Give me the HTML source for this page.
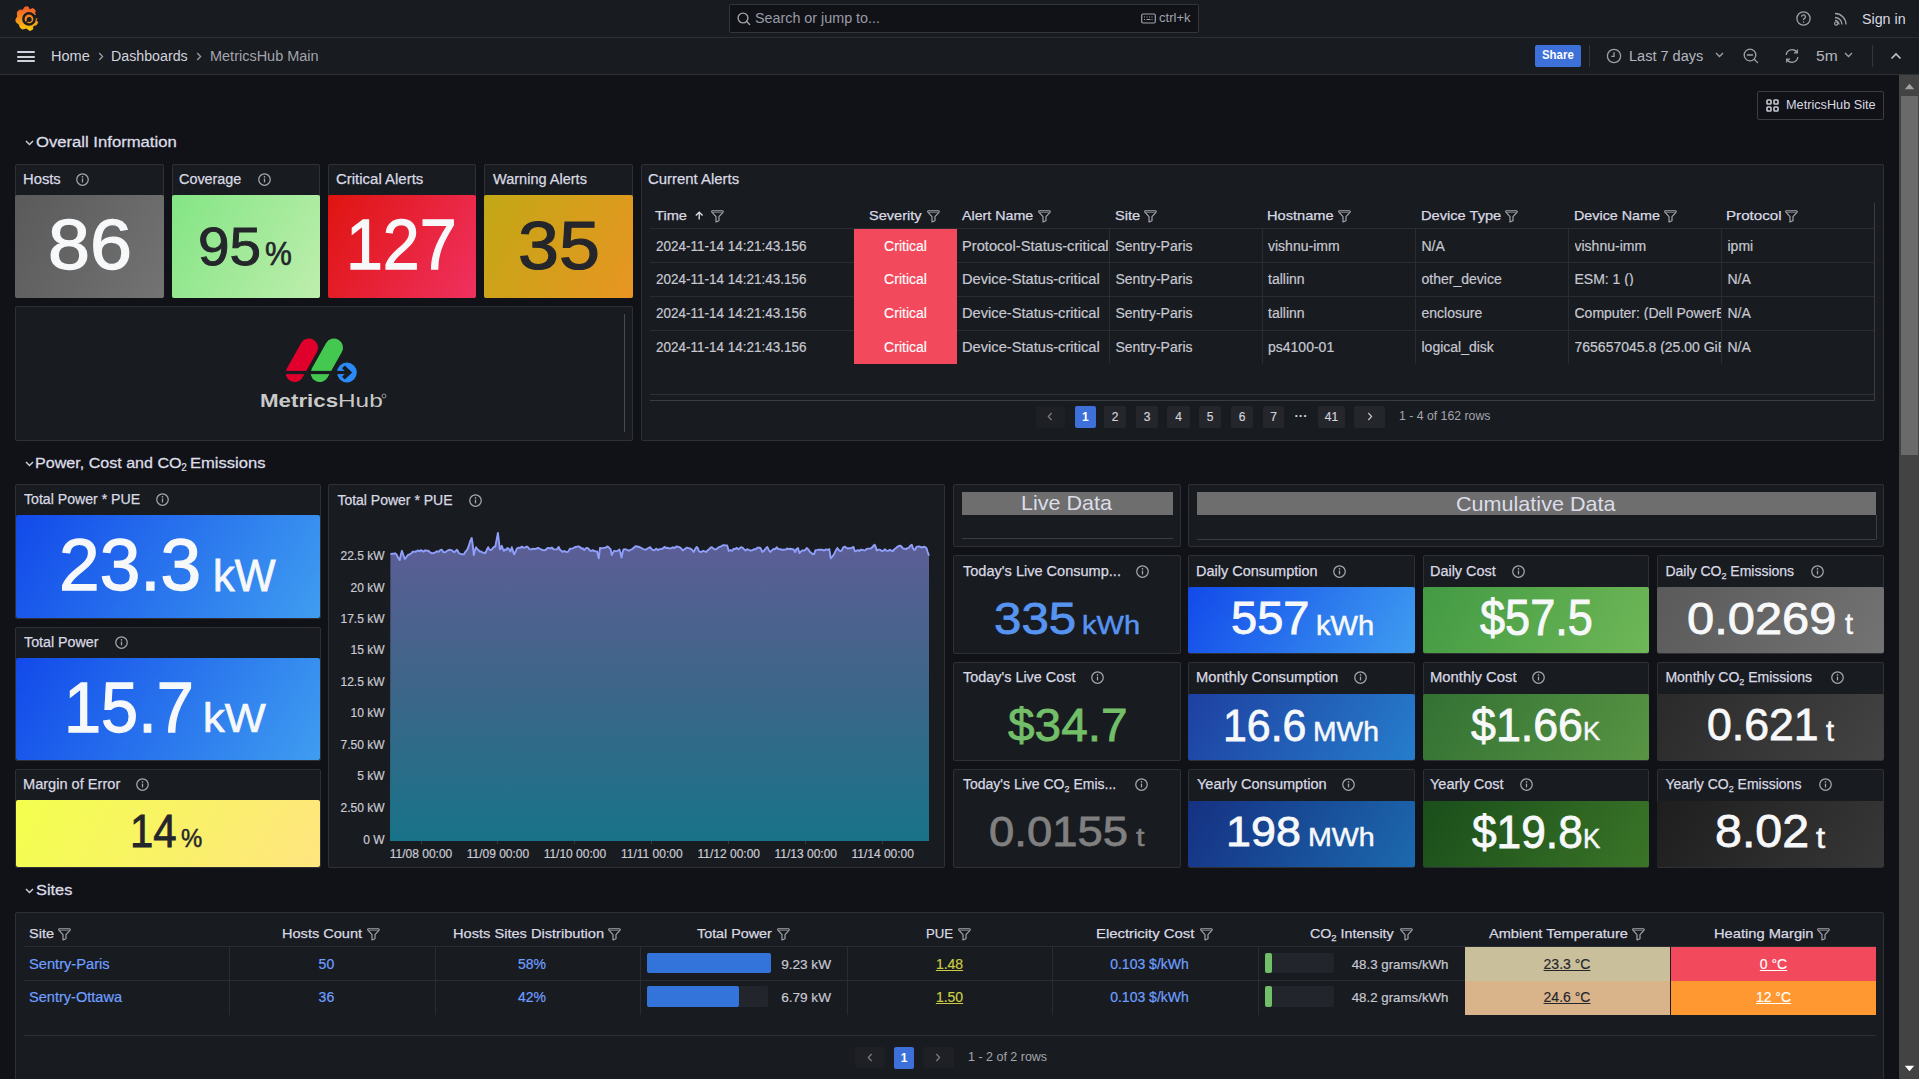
<!DOCTYPE html><html><head><meta charset="utf-8"><title>MetricsHub Main - Dashboards - Grafana</title><style>
*{box-sizing:border-box;margin:0;padding:0}
html,body{width:1919px;height:1079px;overflow:hidden;background:#111217}
body{font-family:"Liberation Sans",sans-serif;position:relative}
.t{position:absolute;white-space:nowrap}
.b{position:absolute}
.p{position:absolute;background:#181b1f;border:1px solid #2e3036;border-radius:2px}
svg{position:absolute;overflow:visible}
</style></head><body>
<div class="b" style="left:0px;top:0px;width:1919px;height:37px;background:#181b1f"></div>
<div class="b" style="left:0px;top:37px;width:1919px;height:1px;background:#2e3036"></div>
<div class="b" style="left:0px;top:38px;width:1919px;height:36px;background:#181b1f"></div>
<div class="b" style="left:0px;top:74px;width:1919px;height:1px;background:#2e3036"></div>
<svg style="left:0;top:0" width="45" height="37" viewBox="0 0 45 37">
<defs><linearGradient id="gl" x1="0" y1="6" x2="0" y2="31" gradientUnits="userSpaceOnUse"><stop offset="0" stop-color="#f4582a"/><stop offset="0.5" stop-color="#f68a1e"/><stop offset="1" stop-color="#fccd0b"/></linearGradient></defs>
<polygon fill="url(#gl)" stroke="url(#gl)" stroke-width="1.0" stroke-linejoin="round" points="25.15,6.89 28.05,6.89 29.63,9.91 32.78,8.41 35.09,10.21 34.65,14.05 36.84,15.96 37.20,18.52 35.80,20.07 37.63,22.28 36.44,24.85 33.00,25.45 32.51,29.37 29.76,30.48 26.19,27.99 22.84,29.04 20.45,27.82 19.22,24.36 16.39,22.22 15.84,19.64 17.62,16.29 17.34,12.22 19.19,10.17 22.82,10.20"/>
<circle cx="29.0" cy="18.9" r="5.6" fill="none" stroke="#181b1f" stroke-width="2.5"/>
<circle cx="29.2" cy="19.5" r="2.5" fill="#181b1f"/>
<path d="M33.6 15.6 L38.5 14.2 L38.5 18.6 L34.2 18.2 Z" fill="#181b1f"/>
<path d="M26.2 20.6 L26.0 22.6 L28.6 22.2 Z" fill="#181b1f"/>
</svg>
<div class="b" style="left:728.5px;top:3.5px;width:470px;height:29px;background:#111217;border:1px solid #34363c;border-radius:2px"></div>
<svg style="left:737px;top:12px" width="14" height="14" viewBox="0 0 14 14"><circle cx="6" cy="6" r="4.9" fill="none" stroke="#a0a1ab" stroke-width="1.4"/><path d="M9.6 9.6 L12.6 12.6" stroke="#a0a1ab" stroke-width="1.4" stroke-linecap="round"/></svg>
<div class="t" style="left:755.34px;top:11.15px;font-size:14px;line-height:14px;color:#9a9ba6;transform:scaleX(1.0229);transform-origin:0 0;">Search or jump to...</div>
<svg style="left:1141px;top:13px" width="15" height="11" viewBox="0 0 15 11"><rect x="0.7" y="1" width="13.6" height="9" rx="1.5" fill="none" stroke="#a0a1ab" stroke-width="1.2"/><path d="M3 4h1M5.5 4h1M8 4h1M10.5 4h1M3 6.5h1M5.5 6.5h4M10.5 6.5h1" stroke="#a0a1ab" stroke-width="1"/></svg>
<div class="t" style="left:1159.45px;top:12.34px;font-size:12px;line-height:12px;color:#a0a1ab;transform:scaleX(1.0873);transform-origin:0 0;">ctrl+k</div>
<svg style="left:1796px;top:11px" width="15" height="15" viewBox="0 0 15 15"><circle cx="7.5" cy="7.5" r="6.6" fill="none" stroke="#a0a1ab" stroke-width="1.3"/><path d="M5.6 5.8 A1.9 1.9 0 1 1 8.2 7.6 Q7.5 8 7.5 9" fill="none" stroke="#a0a1ab" stroke-width="1.3"/><circle cx="7.5" cy="11" r="0.8" fill="#a0a1ab"/></svg>
<svg style="left:1834px;top:11px" width="14" height="15" viewBox="0 0 14 15"><circle cx="2.2" cy="12.6" r="1.6" fill="none" stroke="#a0a1ab" stroke-width="1.2"/><path d="M1 6.5 A7 7 0 0 1 8 13.5 M1 2.5 A11 11 0 0 1 12 13.5" fill="none" stroke="#a0a1ab" stroke-width="1.3"/><path d="M1 9.5 A4 4 0 0 1 5 13.5" fill="none" stroke="#a0a1ab" stroke-width="1.3"/></svg>
<div class="t" style="left:1861.84px;top:11.65px;font-size:14px;line-height:14px;color:#d8d9e3;transform:scaleX(1.0183);transform-origin:0 0;">Sign in</div>
<div class="b" style="left:17px;top:51px;width:18px;height:2px;background:#d0d1dc;border-radius:1px"></div>
<div class="b" style="left:17px;top:55.5px;width:18px;height:2px;background:#d0d1dc;border-radius:1px"></div>
<div class="b" style="left:17px;top:60px;width:18px;height:2px;background:#d0d1dc;border-radius:1px"></div>
<div class="t" style="left:51.31px;top:48.65px;font-size:14px;line-height:14px;color:#d2d3de;transform:scaleX(1.0401);transform-origin:0 0;">Home</div>
<svg style="left:98px;top:52px" width="6" height="9" viewBox="0 0 6 9"><path d="M1.2 1 L4.6 4.5 L1.2 8" fill="none" stroke="#9a9ba6" stroke-width="1.3"/></svg>
<div class="t" style="left:111.33px;top:48.65px;font-size:14px;line-height:14px;color:#d2d3de;transform:scaleX(1.0158);transform-origin:0 0;">Dashboards</div>
<svg style="left:196px;top:52px" width="6" height="9" viewBox="0 0 6 9"><path d="M1.2 1 L4.6 4.5 L1.2 8" fill="none" stroke="#9a9ba6" stroke-width="1.3"/></svg>
<div class="t" style="left:210.31px;top:48.65px;font-size:14px;line-height:14px;color:#a3a4ae;transform:scaleX(1.0343);transform-origin:0 0;">MetricsHub Main</div>
<div class="b" style="left:1535px;top:45px;width:46px;height:22px;background:#3d71d9;border-radius:2px"></div>
<div class="t" style="left:1542.17px;top:49.34px;font-size:12px;line-height:12px;color:#ffffff;font-weight:700;transform:scaleX(0.9512);transform-origin:0 0;">Share</div>
<div class="b" style="left:1589px;top:45px;width:1px;height:22px;background:#34363c"></div>
<svg style="left:1606px;top:48px" width="16" height="16" viewBox="0 0 16 16"><circle cx="8" cy="8" r="6.6" fill="none" stroke="#a0a1ab" stroke-width="1.3"/><path d="M8 4.2 V8.3 H5.4" fill="none" stroke="#a0a1ab" stroke-width="1.3"/></svg>
<div class="t" style="left:1628.81px;top:49.15px;font-size:14px;line-height:14px;color:#b5b6c0;transform:scaleX(1.0365);transform-origin:0 0;">Last 7 days</div>
<svg style="left:1715px;top:52px" width="9" height="6" viewBox="0 0 9 6"><path d="M1 1 L4.5 4.5 L8 1" fill="none" stroke="#a0a1ab" stroke-width="1.3"/></svg>
<svg style="left:1743px;top:48px" width="16" height="16" viewBox="0 0 16 16"><circle cx="7" cy="7" r="5.8" fill="none" stroke="#a0a1ab" stroke-width="1.3"/><path d="M4.4 7 H9.6 M11.2 11.2 L14.6 14.6" stroke="#a0a1ab" stroke-width="1.3" stroke-linecap="round"/></svg>
<svg style="left:1784px;top:48px" width="16" height="16" viewBox="0 0 16 16"><path d="M2.2 7 A5.8 5.8 0 0 1 13 4.6 M13.8 9 A5.8 5.8 0 0 1 3 11.4" fill="none" stroke="#a0a1ab" stroke-width="1.3"/><path d="M13.3 1.6 V4.9 H10 M2.7 14.4 V11.1 H6" fill="none" stroke="#a0a1ab" stroke-width="1.3"/></svg>
<div class="t" style="left:1816.38px;top:49.15px;font-size:14px;line-height:14px;color:#b5b6c0;transform:scaleX(1.1135);transform-origin:0 0;">5m</div>
<svg style="left:1844px;top:52px" width="9" height="6" viewBox="0 0 9 6"><path d="M1 1 L4.5 4.5 L8 1" fill="none" stroke="#a0a1ab" stroke-width="1.3"/></svg>
<div class="b" style="left:1872px;top:45px;width:1px;height:22px;background:#34363c"></div>
<svg style="left:1890px;top:52px" width="12" height="8" viewBox="0 0 12 8"><path d="M1.5 6.5 L6 2 L10.5 6.5" fill="none" stroke="#c0c1cb" stroke-width="1.6"/></svg>
<div class="b" style="left:1899px;top:75px;width:20px;height:1004px;background:#434343"></div>
<div class="b" style="left:1901px;top:95.5px;width:17px;height:359.5px;background:#6a6a6a"></div>
<svg style="left:1904px;top:83px" width="11" height="7" viewBox="0 0 11 7"><path d="M0.8 6.2 L5.5 0.8 L10.2 6.2 Z" fill="#a3a3a3"/></svg>
<svg style="left:1904px;top:1065px" width="11" height="7" viewBox="0 0 11 7"><path d="M0.8 0.8 L5.5 6.2 L10.2 0.8 Z" fill="#ffffff"/></svg>
<div class="b" style="left:1756.5px;top:90.5px;width:127.5px;height:29px;border:1px solid #3a3c42;border-radius:2px"></div>
<svg style="left:1766px;top:99px" width="13" height="13" viewBox="0 0 13 13"><g fill="none" stroke="#c7c8d2" stroke-width="1.6"><rect x="1" y="1" width="4" height="4" rx="0.8"/><rect x="8" y="1" width="4" height="4" rx="0.8"/><rect x="1" y="8" width="4" height="4" rx="0.8"/><rect x="8" y="8" width="4" height="4" rx="0.8"/></g></svg>
<div class="t" style="left:1786.46px;top:98.84px;font-size:12px;line-height:12px;color:#d8d9e3;transform:scaleX(1.0579);transform-origin:0 0;">MetricsHub Site</div>
<svg style="left:24.5px;top:139.5px" width="9" height="6" viewBox="0 0 9 6"><path d="M1 1 L4.5 4.6 L8 1" fill="none" stroke="#cfd0da" stroke-width="1.4"/></svg>
<div class="t" style="left:35.72px;top:133.58px;font-size:15.5px;line-height:15.5px;color:#dcdde6;transform:scaleX(1.0742);transform-origin:0 0;-webkit-text-stroke:0.3px #dcdde6;">Overall Information</div>
<svg style="left:24.5px;top:460.5px" width="9" height="6" viewBox="0 0 9 6"><path d="M1 1 L4.5 4.6 L8 1" fill="none" stroke="#cfd0da" stroke-width="1.4"/></svg>
<div class="p" style="left:15.00px;top:164.00px;width:149.00px;height:134.00px;"></div>
<div class="b" style="left:15px;top:194.6px;width:149px;height:103.4px;background:linear-gradient(120deg, #5a5a5a, #737373);border-radius:2px"></div>
<div class="t" style="left:22.79px;top:172.15px;font-size:14px;line-height:14px;color:#d8d9e3;transform:scaleX(1.0547);transform-origin:0 0;-webkit-text-stroke:0.25px #d8d9e3;">Hosts</div>
<svg style="left:76.00px;top:172.50px" width="13" height="13" viewBox="0 0 13 13"><circle cx="6.5" cy="6.5" r="5.75" fill="none" stroke="#a5a6b0" stroke-width="1.25"/><path d="M6.5 5.6 V9.4" stroke="#a5a6b0" stroke-width="1.3"/><circle cx="6.5" cy="3.9" r="0.8" fill="#a5a6b0"/></svg>
<div class="t" style="left:47.75px;top:209.83px;font-size:70.48px;line-height:70.48px;color:#f7f8fa;transform:scaleX(1.0714);transform-origin:0 0;-webkit-text-stroke:0.018em currentColor;">86</div>
<div class="p" style="left:172.00px;top:164.00px;width:148.00px;height:134.00px;"></div>
<div class="b" style="left:172px;top:194.6px;width:148px;height:103.4px;background:linear-gradient(120deg, #83e584, #beeead);border-radius:2px"></div>
<div class="t" style="left:179.27px;top:172.15px;font-size:14px;line-height:14px;color:#d8d9e3;transform:scaleX(1.0274);transform-origin:0 0;-webkit-text-stroke:0.25px #d8d9e3;">Coverage</div>
<svg style="left:257.50px;top:172.50px" width="13" height="13" viewBox="0 0 13 13"><circle cx="6.5" cy="6.5" r="5.75" fill="none" stroke="#a5a6b0" stroke-width="1.25"/><path d="M6.5 5.6 V9.4" stroke="#a5a6b0" stroke-width="1.3"/><circle cx="6.5" cy="3.9" r="0.8" fill="#a5a6b0"/></svg>
<div class="t" style="left:197.94px;top:218.86px;font-size:54.1px;line-height:54.1px;color:#24262b;transform:scaleX(1.0481);transform-origin:0 0;-webkit-text-stroke:0.018em currentColor;">95</div>
<div class="t" style="left:265.31px;top:237.67px;font-size:32.29px;line-height:32.29px;color:#24262b;transform:scaleX(0.9353);transform-origin:0 0;-webkit-text-stroke:0.018em currentColor;">%</div>
<div class="p" style="left:328.00px;top:164.00px;width:148.00px;height:134.00px;"></div>
<div class="b" style="left:328px;top:194.6px;width:148px;height:103.4px;background:linear-gradient(120deg, #df1410, #f03160);border-radius:2px"></div>
<div class="t" style="left:335.94px;top:172.15px;font-size:14px;line-height:14px;color:#d8d9e3;transform:scaleX(1.0687);transform-origin:0 0;-webkit-text-stroke:0.25px #d8d9e3;">Critical Alerts</div>
<div class="t" style="left:346.36px;top:211.02px;font-size:69.91px;line-height:69.91px;color:#f7f8fa;transform:scaleX(0.9480);transform-origin:0 0;-webkit-text-stroke:0.018em currentColor;">127</div>
<div class="p" style="left:484.00px;top:164.00px;width:149.00px;height:134.00px;"></div>
<div class="b" style="left:484px;top:194.6px;width:149px;height:103.4px;background:linear-gradient(120deg, #c2a815, #e89522);border-radius:2px"></div>
<div class="t" style="left:492.63px;top:172.15px;font-size:14px;line-height:14px;color:#d8d9e3;transform:scaleX(1.0374);transform-origin:0 0;-webkit-text-stroke:0.25px #d8d9e3;">Warning Alerts</div>
<div class="t" style="left:517.60px;top:210.72px;font-size:69.21px;line-height:69.21px;color:#24262b;transform:scaleX(1.0641);transform-origin:0 0;-webkit-text-stroke:0.018em currentColor;">35</div>
<div class="p" style="left:15.00px;top:306.00px;width:618.00px;height:135.00px;"></div>
<div class="b" style="left:624px;top:313.5px;width:1px;height:118px;background:#4a4b50"></div>
<svg style="left:280px;top:334px" width="80" height="52" viewBox="280 334 80 52">
<g stroke-linecap="round" stroke-width="18">
<line x1="294.7" y1="373" x2="309" y2="347.5" stroke="#e0002b"/>
<line x1="319.7" y1="373" x2="334" y2="347.5" stroke="#45c84f"/>
</g>
<circle cx="346.9" cy="372.5" r="9.9" fill="#2a8af6"/>
<rect x="283" y="370.9" width="67" height="3.2" fill="#181b1f"/>
<path d="M343.4 366.9 L349.3 372.5 L343.4 378.1" fill="none" stroke="#181b1f" stroke-width="4.0" stroke-linejoin="miter"/>
</svg>
<div class="t" style="left:259.51px;top:390.92px;font-size:19px;line-height:19px;color:#c9c9c9;font-weight:700;transform:scaleX(1.1742);transform-origin:0 0;">Metrics</div>
<div class="t" style="left:337.50px;top:390.92px;font-size:19px;line-height:19px;color:#c9c9c9;transform:scaleX(1.2835);transform-origin:0 0;">Hub</div>
<svg style="left:380px;top:392px" width="8" height="8" viewBox="0 0 8 8"><circle cx="4" cy="4" r="2.0" fill="none" stroke="#b0b0b0" stroke-width="0.8"/></svg>
<div class="p" style="left:641.00px;top:164.00px;width:1243.00px;height:277.00px;"></div>
<div class="t" style="left:648.44px;top:172.15px;font-size:14px;line-height:14px;color:#d8d9e3;transform:scaleX(1.0644);transform-origin:0 0;-webkit-text-stroke:0.25px #d8d9e3;">Current Alerts</div>
<div class="t" style="left:654.68px;top:208.77px;font-size:13.5px;line-height:13.5px;color:#d8d9e3;transform:scaleX(1.0837);transform-origin:0 0;-webkit-text-stroke:0.25px #d8d9e3;">Time</div>
<div class="t" style="left:868.93px;top:208.77px;font-size:13.5px;line-height:13.5px;color:#d8d9e3;transform:scaleX(1.0787);transform-origin:0 0;-webkit-text-stroke:0.25px #d8d9e3;">Severity</div>
<div class="t" style="left:962.47px;top:208.77px;font-size:13.5px;line-height:13.5px;color:#d8d9e3;transform:scaleX(1.0554);transform-origin:0 0;-webkit-text-stroke:0.25px #d8d9e3;">Alert Name</div>
<div class="t" style="left:1114.53px;top:208.77px;font-size:13.5px;line-height:13.5px;color:#d8d9e3;transform:scaleX(1.0841);transform-origin:0 0;-webkit-text-stroke:0.25px #d8d9e3;">Site</div>
<div class="t" style="left:1267.20px;top:208.77px;font-size:13.5px;line-height:13.5px;color:#d8d9e3;transform:scaleX(1.0833);transform-origin:0 0;-webkit-text-stroke:0.25px #d8d9e3;">Hostname</div>
<div class="t" style="left:1420.70px;top:208.77px;font-size:13.5px;line-height:13.5px;color:#d8d9e3;transform:scaleX(1.0839);transform-origin:0 0;-webkit-text-stroke:0.25px #d8d9e3;">Device Type</div>
<div class="t" style="left:1573.63px;top:208.77px;font-size:13.5px;line-height:13.5px;color:#d8d9e3;transform:scaleX(1.0602);transform-origin:0 0;-webkit-text-stroke:0.25px #d8d9e3;">Device Name</div>
<div class="t" style="left:1726.36px;top:208.77px;font-size:13.5px;line-height:13.5px;color:#d8d9e3;transform:scaleX(1.1220);transform-origin:0 0;-webkit-text-stroke:0.25px #d8d9e3;">Protocol</div>
<svg style="left:694.5px;top:210.5px" width="9" height="9" viewBox="0 0 9 9"><path d="M4.2 8.6 V1.2 M0.8 4.6 L4.2 1.2 L7.6 4.6" fill="none" stroke="#d8d9e3" stroke-width="1.4"/></svg>
<svg style="left:711.30px;top:209.50px" width="13" height="13" viewBox="0 0 13 13"><path d="M1.3 0.7 H11.2 C12.2 0.7 12.6 1.6 11.9 2.4 L8.0 6.6 V10.8 L5.0 12.0 V6.6 L1.1 2.4 C0.4 1.6 0.6 0.7 1.3 0.7 Z" fill="none" stroke="#a5a6b0" stroke-width="1.15" stroke-linejoin="round"/><path d="M1.8 2.3 H10.8" stroke="#a5a6b0" stroke-width="1" opacity="0.7"/></svg>
<svg style="left:926.80px;top:209.50px" width="13" height="13" viewBox="0 0 13 13"><path d="M1.3 0.7 H11.2 C12.2 0.7 12.6 1.6 11.9 2.4 L8.0 6.6 V10.8 L5.0 12.0 V6.6 L1.1 2.4 C0.4 1.6 0.6 0.7 1.3 0.7 Z" fill="none" stroke="#a5a6b0" stroke-width="1.15" stroke-linejoin="round"/><path d="M1.8 2.3 H10.8" stroke="#a5a6b0" stroke-width="1" opacity="0.7"/></svg>
<svg style="left:1037.90px;top:209.50px" width="13" height="13" viewBox="0 0 13 13"><path d="M1.3 0.7 H11.2 C12.2 0.7 12.6 1.6 11.9 2.4 L8.0 6.6 V10.8 L5.0 12.0 V6.6 L1.1 2.4 C0.4 1.6 0.6 0.7 1.3 0.7 Z" fill="none" stroke="#a5a6b0" stroke-width="1.15" stroke-linejoin="round"/><path d="M1.8 2.3 H10.8" stroke="#a5a6b0" stroke-width="1" opacity="0.7"/></svg>
<svg style="left:1144.10px;top:209.50px" width="13" height="13" viewBox="0 0 13 13"><path d="M1.3 0.7 H11.2 C12.2 0.7 12.6 1.6 11.9 2.4 L8.0 6.6 V10.8 L5.0 12.0 V6.6 L1.1 2.4 C0.4 1.6 0.6 0.7 1.3 0.7 Z" fill="none" stroke="#a5a6b0" stroke-width="1.15" stroke-linejoin="round"/><path d="M1.8 2.3 H10.8" stroke="#a5a6b0" stroke-width="1" opacity="0.7"/></svg>
<svg style="left:1337.50px;top:209.50px" width="13" height="13" viewBox="0 0 13 13"><path d="M1.3 0.7 H11.2 C12.2 0.7 12.6 1.6 11.9 2.4 L8.0 6.6 V10.8 L5.0 12.0 V6.6 L1.1 2.4 C0.4 1.6 0.6 0.7 1.3 0.7 Z" fill="none" stroke="#a5a6b0" stroke-width="1.15" stroke-linejoin="round"/><path d="M1.8 2.3 H10.8" stroke="#a5a6b0" stroke-width="1" opacity="0.7"/></svg>
<svg style="left:1505.20px;top:209.50px" width="13" height="13" viewBox="0 0 13 13"><path d="M1.3 0.7 H11.2 C12.2 0.7 12.6 1.6 11.9 2.4 L8.0 6.6 V10.8 L5.0 12.0 V6.6 L1.1 2.4 C0.4 1.6 0.6 0.7 1.3 0.7 Z" fill="none" stroke="#a5a6b0" stroke-width="1.15" stroke-linejoin="round"/><path d="M1.8 2.3 H10.8" stroke="#a5a6b0" stroke-width="1" opacity="0.7"/></svg>
<svg style="left:1664.40px;top:209.50px" width="13" height="13" viewBox="0 0 13 13"><path d="M1.3 0.7 H11.2 C12.2 0.7 12.6 1.6 11.9 2.4 L8.0 6.6 V10.8 L5.0 12.0 V6.6 L1.1 2.4 C0.4 1.6 0.6 0.7 1.3 0.7 Z" fill="none" stroke="#a5a6b0" stroke-width="1.15" stroke-linejoin="round"/><path d="M1.8 2.3 H10.8" stroke="#a5a6b0" stroke-width="1" opacity="0.7"/></svg>
<svg style="left:1785.10px;top:209.50px" width="13" height="13" viewBox="0 0 13 13"><path d="M1.3 0.7 H11.2 C12.2 0.7 12.6 1.6 11.9 2.4 L8.0 6.6 V10.8 L5.0 12.0 V6.6 L1.1 2.4 C0.4 1.6 0.6 0.7 1.3 0.7 Z" fill="none" stroke="#a5a6b0" stroke-width="1.15" stroke-linejoin="round"/><path d="M1.8 2.3 H10.8" stroke="#a5a6b0" stroke-width="1" opacity="0.7"/></svg>
<div class="b" style="left:650px;top:228px;width:1224px;height:1px;background:#2a2c31"></div>
<div class="b" style="left:854px;top:228.5px;width:102.5px;height:34.3px;background:#f2495c"></div>
<div class="t" style="left:655.50px;top:238.65px;font-size:14px;line-height:14px;color:#c7c8d2;transform:scaleX(0.9630);transform-origin:0 0;-webkit-text-stroke:0.2px #c7c8d2;">2024-11-14 14:21:43.156</div>
<div class="t" style="left:305.50px;width:1200px;text-align:center;top:238.65px;font-size:14px;line-height:14px;color:#ffffff;transform-origin:50% 0;-webkit-text-stroke:0.15px #fff;">Critical</div>
<div class="t" style="left:962px;top:238.65px;width:140.5px;overflow:hidden;font-size:14px;line-height:14px;color:#c7c8d2;transform:scaleX(1.047);transform-origin:0 0;-webkit-text-stroke:0.2px #c7c8d2">Protocol-Status-critical</div>
<div class="t" style="left:1115.50px;top:238.65px;font-size:14px;line-height:14px;color:#c7c8d2;transform-origin:0 0;-webkit-text-stroke:0.2px #c7c8d2;">Sentry-Paris</div>
<div class="t" style="left:1268.00px;top:238.65px;font-size:14px;line-height:14px;color:#c7c8d2;transform-origin:0 0;-webkit-text-stroke:0.2px #c7c8d2;">vishnu-imm</div>
<div class="t" style="left:1421.50px;top:238.65px;font-size:14px;line-height:14px;color:#c7c8d2;transform-origin:0 0;-webkit-text-stroke:0.2px #c7c8d2;">N/A</div>
<div class="t" style="left:1574.5px;top:238.65px;width:146px;overflow:hidden;font-size:14px;line-height:14px;color:#c7c8d2;-webkit-text-stroke:0.2px #c7c8d2">vishnu-imm</div>
<div class="t" style="left:1727.50px;top:238.65px;font-size:14px;line-height:14px;color:#c7c8d2;transform-origin:0 0;-webkit-text-stroke:0.2px #c7c8d2;">ipmi</div>
<div class="b" style="left:854px;top:262.3px;width:102.5px;height:34.3px;background:#f2495c"></div>
<div class="t" style="left:655.50px;top:272.45px;font-size:14px;line-height:14px;color:#c7c8d2;transform:scaleX(0.9630);transform-origin:0 0;-webkit-text-stroke:0.2px #c7c8d2;">2024-11-14 14:21:43.156</div>
<div class="t" style="left:305.50px;width:1200px;text-align:center;top:272.45px;font-size:14px;line-height:14px;color:#ffffff;transform-origin:50% 0;-webkit-text-stroke:0.15px #fff;">Critical</div>
<div class="t" style="left:962px;top:272.45px;width:140.5px;overflow:hidden;font-size:14px;line-height:14px;color:#c7c8d2;transform:scaleX(1.047);transform-origin:0 0;-webkit-text-stroke:0.2px #c7c8d2">Device-Status-critical</div>
<div class="t" style="left:1115.50px;top:272.45px;font-size:14px;line-height:14px;color:#c7c8d2;transform-origin:0 0;-webkit-text-stroke:0.2px #c7c8d2;">Sentry-Paris</div>
<div class="t" style="left:1268.00px;top:272.45px;font-size:14px;line-height:14px;color:#c7c8d2;transform-origin:0 0;-webkit-text-stroke:0.2px #c7c8d2;">tallinn</div>
<div class="t" style="left:1421.50px;top:272.45px;font-size:14px;line-height:14px;color:#c7c8d2;transform-origin:0 0;-webkit-text-stroke:0.2px #c7c8d2;">other_device</div>
<div class="t" style="left:1574.5px;top:272.45px;width:146px;overflow:hidden;font-size:14px;line-height:14px;color:#c7c8d2;-webkit-text-stroke:0.2px #c7c8d2">ESM: 1 ()</div>
<div class="t" style="left:1727.50px;top:272.45px;font-size:14px;line-height:14px;color:#c7c8d2;transform-origin:0 0;-webkit-text-stroke:0.2px #c7c8d2;">N/A</div>
<div class="b" style="left:650px;top:262.3px;width:204px;height:1px;background:#2a2c31"></div>
<div class="b" style="left:957px;top:262.3px;width:917px;height:1px;background:#2a2c31"></div>
<div class="b" style="left:854px;top:296.1px;width:102.5px;height:34.3px;background:#f2495c"></div>
<div class="t" style="left:655.50px;top:306.25px;font-size:14px;line-height:14px;color:#c7c8d2;transform:scaleX(0.9630);transform-origin:0 0;-webkit-text-stroke:0.2px #c7c8d2;">2024-11-14 14:21:43.156</div>
<div class="t" style="left:305.50px;width:1200px;text-align:center;top:306.25px;font-size:14px;line-height:14px;color:#ffffff;transform-origin:50% 0;-webkit-text-stroke:0.15px #fff;">Critical</div>
<div class="t" style="left:962px;top:306.25px;width:140.5px;overflow:hidden;font-size:14px;line-height:14px;color:#c7c8d2;transform:scaleX(1.047);transform-origin:0 0;-webkit-text-stroke:0.2px #c7c8d2">Device-Status-critical</div>
<div class="t" style="left:1115.50px;top:306.25px;font-size:14px;line-height:14px;color:#c7c8d2;transform-origin:0 0;-webkit-text-stroke:0.2px #c7c8d2;">Sentry-Paris</div>
<div class="t" style="left:1268.00px;top:306.25px;font-size:14px;line-height:14px;color:#c7c8d2;transform-origin:0 0;-webkit-text-stroke:0.2px #c7c8d2;">tallinn</div>
<div class="t" style="left:1421.50px;top:306.25px;font-size:14px;line-height:14px;color:#c7c8d2;transform-origin:0 0;-webkit-text-stroke:0.2px #c7c8d2;">enclosure</div>
<div class="t" style="left:1574.5px;top:306.25px;width:146px;overflow:hidden;font-size:14px;line-height:14px;color:#c7c8d2;-webkit-text-stroke:0.2px #c7c8d2">Computer: (Dell PowerEdge</div>
<div class="t" style="left:1727.50px;top:306.25px;font-size:14px;line-height:14px;color:#c7c8d2;transform-origin:0 0;-webkit-text-stroke:0.2px #c7c8d2;">N/A</div>
<div class="b" style="left:650px;top:296.1px;width:204px;height:1px;background:#2a2c31"></div>
<div class="b" style="left:957px;top:296.1px;width:917px;height:1px;background:#2a2c31"></div>
<div class="b" style="left:854px;top:329.9px;width:102.5px;height:34.3px;background:#f2495c"></div>
<div class="t" style="left:655.50px;top:340.05px;font-size:14px;line-height:14px;color:#c7c8d2;transform:scaleX(0.9630);transform-origin:0 0;-webkit-text-stroke:0.2px #c7c8d2;">2024-11-14 14:21:43.156</div>
<div class="t" style="left:305.50px;width:1200px;text-align:center;top:340.05px;font-size:14px;line-height:14px;color:#ffffff;transform-origin:50% 0;-webkit-text-stroke:0.15px #fff;">Critical</div>
<div class="t" style="left:962px;top:340.05px;width:140.5px;overflow:hidden;font-size:14px;line-height:14px;color:#c7c8d2;transform:scaleX(1.047);transform-origin:0 0;-webkit-text-stroke:0.2px #c7c8d2">Device-Status-critical</div>
<div class="t" style="left:1115.50px;top:340.05px;font-size:14px;line-height:14px;color:#c7c8d2;transform-origin:0 0;-webkit-text-stroke:0.2px #c7c8d2;">Sentry-Paris</div>
<div class="t" style="left:1268.00px;top:340.05px;font-size:14px;line-height:14px;color:#c7c8d2;transform-origin:0 0;-webkit-text-stroke:0.2px #c7c8d2;">ps4100-01</div>
<div class="t" style="left:1421.50px;top:340.05px;font-size:14px;line-height:14px;color:#c7c8d2;transform-origin:0 0;-webkit-text-stroke:0.2px #c7c8d2;">logical_disk</div>
<div class="t" style="left:1574.5px;top:340.05px;width:146px;overflow:hidden;font-size:14px;line-height:14px;color:#c7c8d2;-webkit-text-stroke:0.2px #c7c8d2">765657045.8 (25.00 GiB)</div>
<div class="t" style="left:1727.50px;top:340.05px;font-size:14px;line-height:14px;color:#c7c8d2;transform-origin:0 0;-webkit-text-stroke:0.2px #c7c8d2;">N/A</div>
<div class="b" style="left:650px;top:329.9px;width:204px;height:1px;background:#2a2c31"></div>
<div class="b" style="left:957px;top:329.9px;width:917px;height:1px;background:#2a2c31"></div>
<div class="b" style="left:1109px;top:228.5px;width:1px;height:135px;background:#2a2c31"></div>
<div class="b" style="left:1262px;top:228.5px;width:1px;height:135px;background:#2a2c31"></div>
<div class="b" style="left:1415px;top:228.5px;width:1px;height:135px;background:#2a2c31"></div>
<div class="b" style="left:1568px;top:228.5px;width:1px;height:135px;background:#2a2c31"></div>
<div class="b" style="left:1721px;top:228.5px;width:1px;height:135px;background:#2a2c31"></div>
<div class="b" style="left:1874px;top:203px;width:1px;height:197.5px;background:#3a3c41"></div>
<div class="b" style="left:650px;top:394px;width:1224px;height:1px;background:#2e3036"></div>
<div class="b" style="left:650px;top:400px;width:1225px;height:1px;background:#3a3c41"></div>
<div class="b" style="left:1035.5px;top:405.75px;width:29.5px;height:21.75px;background:#1e2025;border-radius:2px"></div>
<svg style="left:1047px;top:412px" width="6" height="9" viewBox="0 0 6 9"><path d="M4.6 1 L1.3 4.5 L4.6 8" fill="none" stroke="#7c7d86" stroke-width="1.2"/></svg>
<div class="b" style="left:1075px;top:405.75px;width:20.5px;height:21.75px;background:#3d71d9;border-radius:2px"></div>
<div class="t" style="left:485.25px;width:1200px;text-align:center;top:410.84px;font-size:12px;line-height:12px;color:#ffffff;font-weight:700;transform-origin:50% 0;">1</div>
<div class="b" style="left:1104px;top:405.75px;width:22px;height:21.75px;background:#24262b;border-radius:2px"></div>
<div class="t" style="left:515.00px;width:1200px;text-align:center;top:410.84px;font-size:12px;line-height:12px;color:#d0d1db;transform-origin:50% 0;-webkit-text-stroke:0.2px #d0d1db;">2</div>
<div class="b" style="left:1136px;top:405.75px;width:22px;height:21.75px;background:#24262b;border-radius:2px"></div>
<div class="t" style="left:547.00px;width:1200px;text-align:center;top:410.84px;font-size:12px;line-height:12px;color:#d0d1db;transform-origin:50% 0;-webkit-text-stroke:0.2px #d0d1db;">3</div>
<div class="b" style="left:1167px;top:405.75px;width:23px;height:21.75px;background:#24262b;border-radius:2px"></div>
<div class="t" style="left:578.50px;width:1200px;text-align:center;top:410.84px;font-size:12px;line-height:12px;color:#d0d1db;transform-origin:50% 0;-webkit-text-stroke:0.2px #d0d1db;">4</div>
<div class="b" style="left:1199px;top:405.75px;width:22px;height:21.75px;background:#24262b;border-radius:2px"></div>
<div class="t" style="left:610.00px;width:1200px;text-align:center;top:410.84px;font-size:12px;line-height:12px;color:#d0d1db;transform-origin:50% 0;-webkit-text-stroke:0.2px #d0d1db;">5</div>
<div class="b" style="left:1231px;top:405.75px;width:22px;height:21.75px;background:#24262b;border-radius:2px"></div>
<div class="t" style="left:642.00px;width:1200px;text-align:center;top:410.84px;font-size:12px;line-height:12px;color:#d0d1db;transform-origin:50% 0;-webkit-text-stroke:0.2px #d0d1db;">6</div>
<div class="b" style="left:1263px;top:405.75px;width:21px;height:21.75px;background:#24262b;border-radius:2px"></div>
<div class="t" style="left:673.50px;width:1200px;text-align:center;top:410.84px;font-size:12px;line-height:12px;color:#d0d1db;transform-origin:50% 0;-webkit-text-stroke:0.2px #d0d1db;">7</div>
<div class="b" style="left:1318px;top:405.75px;width:27px;height:21.75px;background:#24262b;border-radius:2px"></div>
<div class="t" style="left:731.50px;width:1200px;text-align:center;top:410.84px;font-size:12px;line-height:12px;color:#d0d1db;transform-origin:50% 0;-webkit-text-stroke:0.2px #d0d1db;">41</div>
<div class="t" style="left:701.00px;width:1200px;text-align:center;top:409.00px;font-size:13px;line-height:13px;color:#d0d1db;font-weight:700;transform-origin:50% 0;">···</div>
<div class="b" style="left:1354px;top:405.75px;width:31px;height:21.75px;background:#24262b;border-radius:2px"></div>
<svg style="left:1366.5px;top:412px" width="6" height="9" viewBox="0 0 6 9"><path d="M1.3 1 L4.6 4.5 L1.3 8" fill="none" stroke="#c0c1cb" stroke-width="1.2"/></svg>
<div class="t" style="left:1399.07px;top:410.34px;font-size:12px;line-height:12px;color:#a5a6b0;transform:scaleX(1.0224);transform-origin:0 0;">1 - 4 of 162 rows</div>
<div class="t" style="left:35.18px;top:454.78px;font-size:15.5px;line-height:15.5px;color:#dcdde6;transform:scaleX(1.0376);transform-origin:0 0;-webkit-text-stroke:0.3px #dcdde6;">Power, Cost and CO</div>
<div class="t" style="left:181.30px;top:463.04px;font-size:10px;line-height:10px;color:#dcdde6;transform-origin:0 0;-webkit-text-stroke:0.2px #dcdde6;">2</div>
<div class="t" style="left:190.14px;top:454.78px;font-size:15.5px;line-height:15.5px;color:#dcdde6;transform:scaleX(1.0682);transform-origin:0 0;-webkit-text-stroke:0.3px #dcdde6;">Emissions</div>
<div class="p" style="left:15.00px;top:484.00px;width:306.00px;height:135.00px;"></div>
<div class="b" style="left:16px;top:515px;width:304px;height:103px;background:linear-gradient(120deg, #124aea, #3f9df0);border-radius:2px"></div>
<svg style="left:156.00px;top:493.20px" width="13" height="13" viewBox="0 0 13 13"><circle cx="6.5" cy="6.5" r="5.75" fill="none" stroke="#a5a6b0" stroke-width="1.25"/><path d="M6.5 5.6 V9.4" stroke="#a5a6b0" stroke-width="1.3"/><circle cx="6.5" cy="3.9" r="0.8" fill="#a5a6b0"/></svg>
<div class="p" style="left:15.00px;top:627.00px;width:306.00px;height:134.00px;"></div>
<div class="b" style="left:16px;top:658px;width:304px;height:102px;background:linear-gradient(120deg, #124aea, #3f9df0);border-radius:2px"></div>
<svg style="left:115.10px;top:636.00px" width="13" height="13" viewBox="0 0 13 13"><circle cx="6.5" cy="6.5" r="5.75" fill="none" stroke="#a5a6b0" stroke-width="1.25"/><path d="M6.5 5.6 V9.4" stroke="#a5a6b0" stroke-width="1.3"/><circle cx="6.5" cy="3.9" r="0.8" fill="#a5a6b0"/></svg>
<div class="p" style="left:15.00px;top:769.00px;width:306.00px;height:99.00px;"></div>
<div class="b" style="left:16px;top:800px;width:304px;height:67px;background:linear-gradient(120deg, #f3ff4d, #ffe580);border-radius:2px"></div>
<svg style="left:135.90px;top:778.10px" width="13" height="13" viewBox="0 0 13 13"><circle cx="6.5" cy="6.5" r="5.75" fill="none" stroke="#a5a6b0" stroke-width="1.25"/><path d="M6.5 5.6 V9.4" stroke="#a5a6b0" stroke-width="1.3"/><circle cx="6.5" cy="3.9" r="0.8" fill="#a5a6b0"/></svg>
<div class="t" style="left:23.69px;top:492.35px;font-size:14px;line-height:14px;color:#d8d9e3;transform:scaleX(1.0083);transform-origin:0 0;-webkit-text-stroke:0.25px #d8d9e3;">Total Power * PUE</div>
<div class="t" style="left:23.99px;top:635.15px;font-size:14px;line-height:14px;color:#d8d9e3;transform:scaleX(1.0192);transform-origin:0 0;-webkit-text-stroke:0.25px #d8d9e3;">Total Power</div>
<div class="t" style="left:22.60px;top:777.25px;font-size:14px;line-height:14px;color:#d8d9e3;transform:scaleX(1.0415);transform-origin:0 0;-webkit-text-stroke:0.25px #d8d9e3;">Margin of Error</div>
<div class="t" style="left:59.15px;top:529.85px;font-size:71.75px;line-height:71.75px;color:#f7f8fa;transform:scaleX(1.0182);transform-origin:0 0;-webkit-text-stroke:0.018em currentColor;">23.3</div>
<div class="t" style="left:212.70px;top:554.52px;font-size:43.45px;line-height:43.45px;color:#f7f8fa;transform:scaleX(0.9957);transform-origin:0 0;-webkit-text-stroke:0.018em currentColor;">kW</div>
<div class="t" style="left:64.33px;top:672.34px;font-size:71.06px;line-height:71.06px;color:#f7f8fa;transform:scaleX(0.9387);transform-origin:0 0;-webkit-text-stroke:0.018em currentColor;">15.7</div>
<div class="t" style="left:203.39px;top:698.17px;font-size:41.38px;line-height:41.38px;color:#f7f8fa;transform:scaleX(1.0490);transform-origin:0 0;-webkit-text-stroke:0.018em currentColor;">kW</div>
<div class="t" style="left:130.02px;top:809.19px;font-size:45.49px;line-height:45.49px;color:#24262b;transform:scaleX(0.9211);transform-origin:0 0;-webkit-text-stroke:0.018em currentColor;">14</div>
<div class="t" style="left:180.74px;top:825.97px;font-size:25.14px;line-height:25.14px;color:#24262b;transform:scaleX(0.9530);transform-origin:0 0;-webkit-text-stroke:0.018em currentColor;">%</div>
<div class="p" style="left:328.00px;top:484.00px;width:617.00px;height:384.00px;"></div>
<div class="t" style="left:337.39px;top:492.65px;font-size:14px;line-height:14px;color:#d8d9e3;transform-origin:0 0;-webkit-text-stroke:0.25px #d8d9e3;">Total Power * PUE</div>
<svg style="left:469.00px;top:493.50px" width="13" height="13" viewBox="0 0 13 13"><circle cx="6.5" cy="6.5" r="5.75" fill="none" stroke="#a5a6b0" stroke-width="1.25"/><path d="M6.5 5.6 V9.4" stroke="#a5a6b0" stroke-width="1.3"/><circle cx="6.5" cy="3.9" r="0.8" fill="#a5a6b0"/></svg>
<div class="t" style="left:-815.50px;width:1200px;text-align:right;top:550.44px;font-size:12px;line-height:12px;color:#c9cad4;transform-origin:100% 0;-webkit-text-stroke:0.2px #c9cad4;">22.5 kW</div>
<div class="t" style="left:-815.50px;width:1200px;text-align:right;top:582.34px;font-size:12px;line-height:12px;color:#c9cad4;transform-origin:100% 0;-webkit-text-stroke:0.2px #c9cad4;">20 kW</div>
<div class="t" style="left:-815.50px;width:1200px;text-align:right;top:612.94px;font-size:12px;line-height:12px;color:#c9cad4;transform-origin:100% 0;-webkit-text-stroke:0.2px #c9cad4;">17.5 kW</div>
<div class="t" style="left:-815.50px;width:1200px;text-align:right;top:644.14px;font-size:12px;line-height:12px;color:#c9cad4;transform-origin:100% 0;-webkit-text-stroke:0.2px #c9cad4;">15 kW</div>
<div class="t" style="left:-815.50px;width:1200px;text-align:right;top:676.14px;font-size:12px;line-height:12px;color:#c9cad4;transform-origin:100% 0;-webkit-text-stroke:0.2px #c9cad4;">12.5 kW</div>
<div class="t" style="left:-815.50px;width:1200px;text-align:right;top:707.44px;font-size:12px;line-height:12px;color:#c9cad4;transform-origin:100% 0;-webkit-text-stroke:0.2px #c9cad4;">10 kW</div>
<div class="t" style="left:-815.50px;width:1200px;text-align:right;top:739.14px;font-size:12px;line-height:12px;color:#c9cad4;transform-origin:100% 0;-webkit-text-stroke:0.2px #c9cad4;">7.50 kW</div>
<div class="t" style="left:-815.50px;width:1200px;text-align:right;top:770.44px;font-size:12px;line-height:12px;color:#c9cad4;transform-origin:100% 0;-webkit-text-stroke:0.2px #c9cad4;">5 kW</div>
<div class="t" style="left:-815.50px;width:1200px;text-align:right;top:802.14px;font-size:12px;line-height:12px;color:#c9cad4;transform-origin:100% 0;-webkit-text-stroke:0.2px #c9cad4;">2.50 kW</div>
<div class="t" style="left:-815.50px;width:1200px;text-align:right;top:833.64px;font-size:12px;line-height:12px;color:#c9cad4;transform-origin:100% 0;-webkit-text-stroke:0.2px #c9cad4;">0 W</div>
<div class="t" style="left:-179.00px;width:1200px;text-align:center;top:848.14px;font-size:12px;line-height:12px;color:#c9cad4;transform-origin:50% 0;-webkit-text-stroke:0.2px #c9cad4;">11/08 00:00</div>
<div class="b" style="left:420.5px;top:841px;width:1px;height:3px;background:#3a3c42"></div>
<div class="t" style="left:-102.05px;width:1200px;text-align:center;top:848.14px;font-size:12px;line-height:12px;color:#c9cad4;transform-origin:50% 0;-webkit-text-stroke:0.2px #c9cad4;">11/09 00:00</div>
<div class="b" style="left:497.45px;top:841px;width:1px;height:3px;background:#3a3c42"></div>
<div class="t" style="left:-25.10px;width:1200px;text-align:center;top:848.14px;font-size:12px;line-height:12px;color:#c9cad4;transform-origin:50% 0;-webkit-text-stroke:0.2px #c9cad4;">11/10 00:00</div>
<div class="b" style="left:574.4px;top:841px;width:1px;height:3px;background:#3a3c42"></div>
<div class="t" style="left:51.85px;width:1200px;text-align:center;top:848.14px;font-size:12px;line-height:12px;color:#c9cad4;transform-origin:50% 0;-webkit-text-stroke:0.2px #c9cad4;">11/11 00:00</div>
<div class="b" style="left:651.35px;top:841px;width:1px;height:3px;background:#3a3c42"></div>
<div class="t" style="left:128.80px;width:1200px;text-align:center;top:848.14px;font-size:12px;line-height:12px;color:#c9cad4;transform-origin:50% 0;-webkit-text-stroke:0.2px #c9cad4;">11/12 00:00</div>
<div class="b" style="left:728.3px;top:841px;width:1px;height:3px;background:#3a3c42"></div>
<div class="t" style="left:205.75px;width:1200px;text-align:center;top:848.14px;font-size:12px;line-height:12px;color:#c9cad4;transform-origin:50% 0;-webkit-text-stroke:0.2px #c9cad4;">11/13 00:00</div>
<div class="b" style="left:805.25px;top:841px;width:1px;height:3px;background:#3a3c42"></div>
<div class="t" style="left:282.70px;width:1200px;text-align:center;top:848.14px;font-size:12px;line-height:12px;color:#c9cad4;transform-origin:50% 0;-webkit-text-stroke:0.2px #c9cad4;">11/14 00:00</div>
<div class="b" style="left:882.2px;top:841px;width:1px;height:3px;background:#3a3c42"></div>
<svg style="left:0;top:0" width="1919" height="1079" viewBox="0 0 1919 1079">
<defs><linearGradient id="cg" x1="0" y1="548" x2="0" y2="841" gradientUnits="userSpaceOnUse"><stop offset="0" stop-color="#5b5e95"/><stop offset="0.45" stop-color="#3f6589"/><stop offset="1" stop-color="#187389"/></linearGradient></defs>
<path d="M390,841 L390.4,554.4 L392.0,553.7 L393.6,553.7 L395.1,553.3 L396.5,554.4 L398.1,557.6 L399.8,560.1 L400.9,554.5 L401.9,550.8 L403.4,555.0 L404.8,559.0 L406.3,557.2 L407.9,555.0 L409.4,554.4 L411.1,553.5 L412.7,551.6 L414.4,551.8 L416.1,551.5 L417.7,550.5 L419.4,551.2 L420.8,550.2 L422.3,550.9 L423.7,551.7 L425.2,550.1 L426.6,550.8 L428.4,550.7 L430.1,552.2 L431.9,553.4 L433.7,553.0 L435.3,552.4 L436.9,551.3 L438.6,551.9 L440.2,550.1 L441.9,549.8 L443.5,552.3 L445.2,552.2 L446.6,551.2 L448.0,550.4 L449.5,549.8 L450.9,550.1 L452.4,550.7 L453.8,552.2 L455.2,551.7 L456.7,549.8 L457.8,550.8 L458.8,553.2 L460.5,553.8 L462.1,554.3 L463.8,554.4 L465.6,551.6 L467.4,549.4 L468.8,545.7 L470.3,540.8 L471.7,537.9 L472.8,545.5 L473.8,555.1 L474.9,550.5 L476.0,547.2 L477.2,549.0 L478.4,549.9 L479.6,551.5 L481.0,551.5 L482.5,552.5 L483.9,552.7 L485.3,553.2 L486.8,549.8 L488.2,547.2 L489.2,549.3 L490.3,550.1 L492.0,549.3 L493.6,547.1 L495.3,546.5 L496.6,539.9 L497.9,532.9 L498.9,541.2 L499.9,549.4 L500.9,548.4 L501.8,545.8 L502.9,548.8 L503.9,550.8 L505.1,549.4 L506.3,549.9 L507.5,547.9 L508.9,548.9 L510.4,551.5 L511.8,547.2 L512.9,550.6 L514.0,554.4 L515.4,552.1 L516.8,548.7 L518.5,547.6 L520.2,547.9 L521.8,546.6 L523.5,547.6 L525.2,547.4 L526.9,546.5 L528.3,547.6 L529.8,549.3 L531.2,549.4 L533.0,548.6 L534.8,549.1 L536.5,548.5 L538.3,547.9 L539.7,548.8 L541.2,549.3 L542.6,550.1 L544.0,550.3 L545.5,550.0 L547.0,548.4 L548.4,547.9 L550.1,548.6 L551.8,547.5 L553.6,549.2 L555.3,549.4 L557.0,549.4 L558.7,546.9 L560.0,549.9 L561.3,550.8 L562.7,551.9 L564.1,551.0 L565.6,551.6 L567.0,552.2 L568.4,551.4 L569.9,548.8 L571.3,548.7 L573.0,548.3 L574.7,547.2 L576.5,546.8 L578.2,546.3 L579.9,546.9 L581.3,548.6 L582.8,548.2 L584.2,550.1 L585.7,548.4 L587.1,547.9 L588.5,548.6 L590.0,550.7 L591.4,550.8 L592.8,550.1 L594.2,551.0 L595.7,551.4 L597.1,551.5 L598.8,558.4 L600.0,547.9 L601.8,548.4 L603.5,547.9 L605.3,547.7 L607.1,546.5 L608.3,547.0 L609.5,548.2 L610.7,549.4 L611.7,555.1 L613.0,552.6 L614.3,550.8 L616.0,551.2 L617.6,550.9 L619.3,549.4 L620.4,552.7 L621.5,557.5 L622.5,552.7 L623.6,549.4 L625.3,549.3 L626.9,549.7 L628.6,550.8 L630.3,549.9 L632.0,549.3 L633.8,547.7 L635.5,546.3 L637.2,546.5 L639.0,547.0 L640.8,547.7 L642.6,548.8 L644.4,549.4 L645.8,549.8 L647.2,548.7 L648.7,547.8 L650.1,547.2 L651.5,548.9 L653.0,550.1 L654.6,550.2 L656.2,548.6 L657.8,550.2 L659.4,549.1 L661.1,549.0 L662.8,548.5 L664.5,546.9 L666.2,548.1 L667.9,547.8 L669.6,548.6 L671.2,548.1 L672.8,547.3 L674.4,548.2 L675.9,546.7 L677.5,546.5 L679.1,547.2 L680.3,547.7 L681.5,548.7 L682.7,550.5 L684.2,549.5 L685.7,548.3 L687.1,547.6 L688.6,548.1 L690.3,548.6 L692.0,549.8 L693.7,552.0 L695.2,549.1 L696.6,546.9 L697.7,547.9 L698.8,551.0 L700.3,552.0 L701.7,551.7 L703.2,550.8 L704.6,551.3 L706.1,552.0 L707.5,550.5 L709.0,549.3 L710.5,547.6 L711.9,547.2 L713.4,548.6 L714.8,549.6 L716.3,549.1 L717.8,547.9 L719.2,546.9 L720.8,546.6 L722.4,545.4 L724.0,545.1 L725.6,545.4 L727.2,545.4 L728.7,551.0 L730.3,550.0 L732.0,550.8 L733.6,548.8 L735.2,549.1 L736.7,547.8 L738.1,549.5 L739.6,548.3 L741.0,547.1 L742.5,547.6 L744.0,549.1 L745.5,550.5 L747.2,549.2 L749.0,550.0 L750.7,550.7 L752.5,550.2 L754.2,549.1 L755.7,549.2 L757.1,547.8 L758.5,547.7 L760.0,547.6 L761.1,549.1 L762.2,552.0 L763.9,550.9 L765.6,548.7 L767.3,546.9 L768.8,550.1 L770.3,552.0 L771.9,550.4 L773.5,549.0 L775.2,549.1 L776.8,547.2 L778.0,548.9 L779.3,549.2 L780.5,549.1 L782.2,549.8 L783.8,549.8 L785.5,549.6 L787.1,548.5 L788.8,549.1 L790.4,548.8 L792.1,549.1 L793.6,549.5 L795.1,552.0 L796.5,549.0 L798.0,548.1 L799.4,553.0 L800.9,551.5 L802.3,550.5 L803.8,550.5 L805.2,550.1 L806.7,548.1 L808.2,549.2 L809.6,551.5 L811.1,552.8 L812.5,554.0 L814.0,554.2 L815.5,550.1 L817.2,549.9 L819.0,549.6 L820.7,549.7 L822.5,549.8 L824.2,550.5 L825.9,549.4 L827.6,549.8 L829.3,549.1 L830.8,558.3 L832.4,556.6 L834.1,553.9 L835.8,550.6 L837.4,548.1 L838.8,550.0 L840.3,551.3 L841.8,550.4 L843.2,547.3 L844.7,546.6 L846.1,547.5 L847.6,548.5 L849.0,548.1 L850.5,548.3 L851.9,547.9 L853.4,546.9 L854.9,551.3 L856.4,551.0 L857.8,550.0 L859.3,551.0 L860.7,549.7 L862.2,549.8 L863.7,550.2 L865.1,550.4 L866.6,548.9 L868.0,548.6 L869.5,548.6 L871.2,548.3 L872.9,546.5 L874.6,544.7 L875.7,546.9 L876.8,550.5 L878.4,549.6 L880.1,549.6 L881.7,551.1 L883.3,550.8 L885.0,549.3 L886.6,550.7 L888.3,550.9 L889.9,549.8 L891.3,550.7 L892.8,551.0 L894.3,549.3 L895.7,548.4 L897.2,546.9 L898.7,546.0 L900.1,545.6 L901.6,546.6 L903.0,548.5 L904.5,548.6 L905.9,549.1 L907.4,548.1 L908.8,547.9 L910.3,545.7 L911.8,544.7 L912.9,548.1 L914.0,549.8 L915.2,549.5 L916.4,547.0 L917.6,546.6 L919.1,546.4 L920.5,546.8 L922.0,547.6 L923.5,546.7 L924.9,546.9 L926.4,548.1 L927.7,552.0 L929.0,555.6 L929,841 Z" fill="url(#cg)"/>
<polyline points="390.4,554.4 392.0,553.7 393.6,553.7 395.1,553.3 396.5,554.4 398.1,557.6 399.8,560.1 400.9,554.5 401.9,550.8 403.4,555.0 404.8,559.0 406.3,557.2 407.9,555.0 409.4,554.4 411.1,553.5 412.7,551.6 414.4,551.8 416.1,551.5 417.7,550.5 419.4,551.2 420.8,550.2 422.3,550.9 423.7,551.7 425.2,550.1 426.6,550.8 428.4,550.7 430.1,552.2 431.9,553.4 433.7,553.0 435.3,552.4 436.9,551.3 438.6,551.9 440.2,550.1 441.9,549.8 443.5,552.3 445.2,552.2 446.6,551.2 448.0,550.4 449.5,549.8 450.9,550.1 452.4,550.7 453.8,552.2 455.2,551.7 456.7,549.8 457.8,550.8 458.8,553.2 460.5,553.8 462.1,554.3 463.8,554.4 465.6,551.6 467.4,549.4 468.8,545.7 470.3,540.8 471.7,537.9 472.8,545.5 473.8,555.1 474.9,550.5 476.0,547.2 477.2,549.0 478.4,549.9 479.6,551.5 481.0,551.5 482.5,552.5 483.9,552.7 485.3,553.2 486.8,549.8 488.2,547.2 489.2,549.3 490.3,550.1 492.0,549.3 493.6,547.1 495.3,546.5 496.6,539.9 497.9,532.9 498.9,541.2 499.9,549.4 500.9,548.4 501.8,545.8 502.9,548.8 503.9,550.8 505.1,549.4 506.3,549.9 507.5,547.9 508.9,548.9 510.4,551.5 511.8,547.2 512.9,550.6 514.0,554.4 515.4,552.1 516.8,548.7 518.5,547.6 520.2,547.9 521.8,546.6 523.5,547.6 525.2,547.4 526.9,546.5 528.3,547.6 529.8,549.3 531.2,549.4 533.0,548.6 534.8,549.1 536.5,548.5 538.3,547.9 539.7,548.8 541.2,549.3 542.6,550.1 544.0,550.3 545.5,550.0 547.0,548.4 548.4,547.9 550.1,548.6 551.8,547.5 553.6,549.2 555.3,549.4 557.0,549.4 558.7,546.9 560.0,549.9 561.3,550.8 562.7,551.9 564.1,551.0 565.6,551.6 567.0,552.2 568.4,551.4 569.9,548.8 571.3,548.7 573.0,548.3 574.7,547.2 576.5,546.8 578.2,546.3 579.9,546.9 581.3,548.6 582.8,548.2 584.2,550.1 585.7,548.4 587.1,547.9 588.5,548.6 590.0,550.7 591.4,550.8 592.8,550.1 594.2,551.0 595.7,551.4 597.1,551.5 598.8,558.4 600.0,547.9 601.8,548.4 603.5,547.9 605.3,547.7 607.1,546.5 608.3,547.0 609.5,548.2 610.7,549.4 611.7,555.1 613.0,552.6 614.3,550.8 616.0,551.2 617.6,550.9 619.3,549.4 620.4,552.7 621.5,557.5 622.5,552.7 623.6,549.4 625.3,549.3 626.9,549.7 628.6,550.8 630.3,549.9 632.0,549.3 633.8,547.7 635.5,546.3 637.2,546.5 639.0,547.0 640.8,547.7 642.6,548.8 644.4,549.4 645.8,549.8 647.2,548.7 648.7,547.8 650.1,547.2 651.5,548.9 653.0,550.1 654.6,550.2 656.2,548.6 657.8,550.2 659.4,549.1 661.1,549.0 662.8,548.5 664.5,546.9 666.2,548.1 667.9,547.8 669.6,548.6 671.2,548.1 672.8,547.3 674.4,548.2 675.9,546.7 677.5,546.5 679.1,547.2 680.3,547.7 681.5,548.7 682.7,550.5 684.2,549.5 685.7,548.3 687.1,547.6 688.6,548.1 690.3,548.6 692.0,549.8 693.7,552.0 695.2,549.1 696.6,546.9 697.7,547.9 698.8,551.0 700.3,552.0 701.7,551.7 703.2,550.8 704.6,551.3 706.1,552.0 707.5,550.5 709.0,549.3 710.5,547.6 711.9,547.2 713.4,548.6 714.8,549.6 716.3,549.1 717.8,547.9 719.2,546.9 720.8,546.6 722.4,545.4 724.0,545.1 725.6,545.4 727.2,545.4 728.7,551.0 730.3,550.0 732.0,550.8 733.6,548.8 735.2,549.1 736.7,547.8 738.1,549.5 739.6,548.3 741.0,547.1 742.5,547.6 744.0,549.1 745.5,550.5 747.2,549.2 749.0,550.0 750.7,550.7 752.5,550.2 754.2,549.1 755.7,549.2 757.1,547.8 758.5,547.7 760.0,547.6 761.1,549.1 762.2,552.0 763.9,550.9 765.6,548.7 767.3,546.9 768.8,550.1 770.3,552.0 771.9,550.4 773.5,549.0 775.2,549.1 776.8,547.2 778.0,548.9 779.3,549.2 780.5,549.1 782.2,549.8 783.8,549.8 785.5,549.6 787.1,548.5 788.8,549.1 790.4,548.8 792.1,549.1 793.6,549.5 795.1,552.0 796.5,549.0 798.0,548.1 799.4,553.0 800.9,551.5 802.3,550.5 803.8,550.5 805.2,550.1 806.7,548.1 808.2,549.2 809.6,551.5 811.1,552.8 812.5,554.0 814.0,554.2 815.5,550.1 817.2,549.9 819.0,549.6 820.7,549.7 822.5,549.8 824.2,550.5 825.9,549.4 827.6,549.8 829.3,549.1 830.8,558.3 832.4,556.6 834.1,553.9 835.8,550.6 837.4,548.1 838.8,550.0 840.3,551.3 841.8,550.4 843.2,547.3 844.7,546.6 846.1,547.5 847.6,548.5 849.0,548.1 850.5,548.3 851.9,547.9 853.4,546.9 854.9,551.3 856.4,551.0 857.8,550.0 859.3,551.0 860.7,549.7 862.2,549.8 863.7,550.2 865.1,550.4 866.6,548.9 868.0,548.6 869.5,548.6 871.2,548.3 872.9,546.5 874.6,544.7 875.7,546.9 876.8,550.5 878.4,549.6 880.1,549.6 881.7,551.1 883.3,550.8 885.0,549.3 886.6,550.7 888.3,550.9 889.9,549.8 891.3,550.7 892.8,551.0 894.3,549.3 895.7,548.4 897.2,546.9 898.7,546.0 900.1,545.6 901.6,546.6 903.0,548.5 904.5,548.6 905.9,549.1 907.4,548.1 908.8,547.9 910.3,545.7 911.8,544.7 912.9,548.1 914.0,549.8 915.2,549.5 916.4,547.0 917.6,546.6 919.1,546.4 920.5,546.8 922.0,547.6 923.5,546.7 924.9,546.9 926.4,548.1 927.7,552.0 929.0,555.6" fill="none" stroke="#8f9ffa" stroke-width="1.9" stroke-linejoin="round"/>
</svg>
<div class="p" style="left:953.00px;top:484.00px;width:228.00px;height:63.00px;"></div>
<div class="b" style="left:962px;top:492.3px;width:210.5px;height:22.7px;background:#6e6e6e"></div>
<div class="t" style="left:1020.73px;top:491.92px;font-size:21px;line-height:21px;color:#dcdde8;transform:scaleX(1.0255);transform-origin:0 0;">Live Data</div>
<div class="b" style="left:962px;top:538px;width:210.5px;height:1px;background:#3b3d42"></div>
<div class="p" style="left:1188.00px;top:484.00px;width:696.00px;height:63.00px;"></div>
<div class="b" style="left:1197px;top:492px;width:679px;height:23px;background:#6e6e6e"></div>
<div class="t" style="left:1455.90px;top:492.72px;font-size:21px;line-height:21px;color:#dcdde8;transform:scaleX(1.0275);transform-origin:0 0;">Cumulative Data</div>
<div class="b" style="left:1197px;top:538.5px;width:679px;height:1px;background:#3b3d42"></div>
<div class="b" style="left:1875.5px;top:515px;width:1px;height:24px;background:#3b3d42"></div>
<div class="p" style="left:953.00px;top:555.00px;width:228.00px;height:99.00px;"></div>
<div class="p" style="left:953.00px;top:662.00px;width:228.00px;height:99.00px;"></div>
<div class="p" style="left:953.00px;top:769.00px;width:228.00px;height:99.00px;"></div>
<div class="t" style="left:962.58px;top:563.95px;font-size:14px;line-height:14px;color:#d8d9e3;transform:scaleX(1.0385);transform-origin:0 0;-webkit-text-stroke:0.25px #d8d9e3;">Today&#x27;s Live Consump...</div>
<svg style="left:1135.50px;top:564.70px" width="13" height="13" viewBox="0 0 13 13"><circle cx="6.5" cy="6.5" r="5.75" fill="none" stroke="#a5a6b0" stroke-width="1.25"/><path d="M6.5 5.6 V9.4" stroke="#a5a6b0" stroke-width="1.3"/><circle cx="6.5" cy="3.9" r="0.8" fill="#a5a6b0"/></svg>
<div class="t" style="left:962.68px;top:669.55px;font-size:14px;line-height:14px;color:#d8d9e3;transform:scaleX(1.0287);transform-origin:0 0;-webkit-text-stroke:0.25px #d8d9e3;">Today&#x27;s Live Cost</div>
<svg style="left:1091.40px;top:671.30px" width="13" height="13" viewBox="0 0 13 13"><circle cx="6.5" cy="6.5" r="5.75" fill="none" stroke="#a5a6b0" stroke-width="1.25"/><path d="M6.5 5.6 V9.4" stroke="#a5a6b0" stroke-width="1.3"/><circle cx="6.5" cy="3.9" r="0.8" fill="#a5a6b0"/></svg>
<div class="t" style="left:963.00px;top:776.75px;font-size:14px;line-height:14px;color:#d8d9e3;-webkit-text-stroke:0.25px #d8d9e3;">Today&#x27;s Live CO<span style="font-size:9px;position:relative;top:3px">2</span> Emis...</div>
<svg style="left:1135.40px;top:778.30px" width="13" height="13" viewBox="0 0 13 13"><circle cx="6.5" cy="6.5" r="5.75" fill="none" stroke="#a5a6b0" stroke-width="1.25"/><path d="M6.5 5.6 V9.4" stroke="#a5a6b0" stroke-width="1.3"/><circle cx="6.5" cy="3.9" r="0.8" fill="#a5a6b0"/></svg>
<div class="t" style="left:994.03px;top:596.57px;font-size:44.63px;line-height:44.63px;color:#5794f2;transform:scaleX(1.1033);transform-origin:0 0;-webkit-text-stroke:0.018em currentColor;">335</div>
<div class="t" style="left:1082.16px;top:613.20px;font-size:25.52px;line-height:25.52px;color:#5794f2;transform:scaleX(1.1371);transform-origin:0 0;-webkit-text-stroke:0.018em currentColor;">kWh</div>
<div class="t" style="left:1008.27px;top:702.16px;font-size:46.05px;line-height:46.05px;color:#73bf69;transform:scaleX(1.0373);transform-origin:0 0;-webkit-text-stroke:0.018em currentColor;">$34.7</div>
<div class="t" style="left:989.13px;top:810.22px;font-size:42.94px;line-height:42.94px;color:#808080;transform:scaleX(1.0585);transform-origin:0 0;-webkit-text-stroke:0.018em currentColor;">0.0155</div>
<div class="t" style="left:1136.34px;top:824.26px;font-size:26.61px;line-height:26.61px;color:#808080;transform:scaleX(1.1452);transform-origin:0 0;-webkit-text-stroke:0.018em currentColor;">t</div>
<div class="p" style="left:1188.00px;top:555.00px;width:227.00px;height:99.00px;"></div>
<div class="b" style="left:1188px;top:586.5px;width:227px;height:66.8px;background:linear-gradient(120deg, #124aea, #3f9df0);border-radius:2px"></div>
<div class="p" style="left:1423.00px;top:555.00px;width:226.00px;height:99.00px;"></div>
<div class="b" style="left:1423px;top:586.5px;width:226px;height:66.8px;background:linear-gradient(120deg, #429a43, #6fb757);border-radius:2px"></div>
<div class="p" style="left:1657.00px;top:555.00px;width:227.00px;height:99.00px;"></div>
<div class="b" style="left:1657px;top:586.5px;width:227px;height:66.8px;background:linear-gradient(120deg, #5a5a5a, #737373);border-radius:2px"></div>
<div class="p" style="left:1188.00px;top:662.00px;width:227.00px;height:99.00px;"></div>
<div class="b" style="left:1188px;top:693.5px;width:227px;height:66.8px;background:linear-gradient(120deg, #1e40a1, #267dcc);border-radius:2px"></div>
<div class="p" style="left:1423.00px;top:662.00px;width:226.00px;height:99.00px;"></div>
<div class="b" style="left:1423px;top:693.5px;width:226px;height:66.8px;background:linear-gradient(120deg, #337134, #589443);border-radius:2px"></div>
<div class="p" style="left:1657.00px;top:662.00px;width:227.00px;height:99.00px;"></div>
<div class="b" style="left:1657px;top:693.5px;width:227px;height:66.8px;background:linear-gradient(120deg, #2a2a2a, #434343);border-radius:2px"></div>
<div class="p" style="left:1188.00px;top:769.00px;width:227.00px;height:99.00px;"></div>
<div class="b" style="left:1188px;top:800.5px;width:227px;height:66.8px;background:linear-gradient(120deg, #153182, #1c69ae);border-radius:2px"></div>
<div class="p" style="left:1423.00px;top:769.00px;width:226.00px;height:99.00px;"></div>
<div class="b" style="left:1423px;top:800.5px;width:226px;height:66.8px;background:linear-gradient(120deg, #1a4e1b, #3a7427);border-radius:2px"></div>
<div class="p" style="left:1657.00px;top:769.00px;width:227.00px;height:99.00px;"></div>
<div class="b" style="left:1657px;top:800.5px;width:227px;height:66.8px;background:linear-gradient(120deg, #1e1e1e, #373737);border-radius:2px"></div>
<div class="t" style="left:1195.71px;top:564.05px;font-size:14px;line-height:14px;color:#d8d9e3;transform:scaleX(1.0344);transform-origin:0 0;-webkit-text-stroke:0.25px #d8d9e3;">Daily Consumption</div>
<svg style="left:1332.70px;top:564.60px" width="13" height="13" viewBox="0 0 13 13"><circle cx="6.5" cy="6.5" r="5.75" fill="none" stroke="#a5a6b0" stroke-width="1.25"/><path d="M6.5 5.6 V9.4" stroke="#a5a6b0" stroke-width="1.3"/><circle cx="6.5" cy="3.9" r="0.8" fill="#a5a6b0"/></svg>
<div class="t" style="left:1429.62px;top:564.05px;font-size:14px;line-height:14px;color:#d8d9e3;transform:scaleX(1.0311);transform-origin:0 0;-webkit-text-stroke:0.25px #d8d9e3;">Daily Cost</div>
<svg style="left:1512.10px;top:564.60px" width="13" height="13" viewBox="0 0 13 13"><circle cx="6.5" cy="6.5" r="5.75" fill="none" stroke="#a5a6b0" stroke-width="1.25"/><path d="M6.5 5.6 V9.4" stroke="#a5a6b0" stroke-width="1.3"/><circle cx="6.5" cy="3.9" r="0.8" fill="#a5a6b0"/></svg>
<div class="t" style="left:1665.40px;top:564.05px;font-size:14px;line-height:14px;color:#d8d9e3;-webkit-text-stroke:0.25px #d8d9e3;">Daily CO<span style="font-size:9px;position:relative;top:3px">2</span> Emissions</div>
<svg style="left:1810.50px;top:564.60px" width="13" height="13" viewBox="0 0 13 13"><circle cx="6.5" cy="6.5" r="5.75" fill="none" stroke="#a5a6b0" stroke-width="1.25"/><path d="M6.5 5.6 V9.4" stroke="#a5a6b0" stroke-width="1.3"/><circle cx="6.5" cy="3.9" r="0.8" fill="#a5a6b0"/></svg>
<div class="t" style="left:1195.69px;top:670.25px;font-size:14px;line-height:14px;color:#d8d9e3;transform:scaleX(1.0507);transform-origin:0 0;-webkit-text-stroke:0.25px #d8d9e3;">Monthly Consumption</div>
<svg style="left:1353.70px;top:671.20px" width="13" height="13" viewBox="0 0 13 13"><circle cx="6.5" cy="6.5" r="5.75" fill="none" stroke="#a5a6b0" stroke-width="1.25"/><path d="M6.5 5.6 V9.4" stroke="#a5a6b0" stroke-width="1.3"/><circle cx="6.5" cy="3.9" r="0.8" fill="#a5a6b0"/></svg>
<div class="t" style="left:1429.58px;top:670.25px;font-size:14px;line-height:14px;color:#d8d9e3;transform:scaleX(1.0589);transform-origin:0 0;-webkit-text-stroke:0.25px #d8d9e3;">Monthly Cost</div>
<svg style="left:1532.00px;top:671.20px" width="13" height="13" viewBox="0 0 13 13"><circle cx="6.5" cy="6.5" r="5.75" fill="none" stroke="#a5a6b0" stroke-width="1.25"/><path d="M6.5 5.6 V9.4" stroke="#a5a6b0" stroke-width="1.3"/><circle cx="6.5" cy="3.9" r="0.8" fill="#a5a6b0"/></svg>
<div class="t" style="left:1665.40px;top:670.25px;font-size:14px;line-height:14px;color:#d8d9e3;-webkit-text-stroke:0.25px #d8d9e3;">Monthly CO<span style="font-size:9px;position:relative;top:3px">2</span> Emissions</div>
<svg style="left:1830.50px;top:671.20px" width="13" height="13" viewBox="0 0 13 13"><circle cx="6.5" cy="6.5" r="5.75" fill="none" stroke="#a5a6b0" stroke-width="1.25"/><path d="M6.5 5.6 V9.4" stroke="#a5a6b0" stroke-width="1.3"/><circle cx="6.5" cy="3.9" r="0.8" fill="#a5a6b0"/></svg>
<div class="t" style="left:1196.58px;top:777.25px;font-size:14px;line-height:14px;color:#d8d9e3;transform:scaleX(1.0391);transform-origin:0 0;-webkit-text-stroke:0.25px #d8d9e3;">Yearly Consumption</div>
<svg style="left:1341.70px;top:778.20px" width="13" height="13" viewBox="0 0 13 13"><circle cx="6.5" cy="6.5" r="5.75" fill="none" stroke="#a5a6b0" stroke-width="1.25"/><path d="M6.5 5.6 V9.4" stroke="#a5a6b0" stroke-width="1.3"/><circle cx="6.5" cy="3.9" r="0.8" fill="#a5a6b0"/></svg>
<div class="t" style="left:1430.48px;top:777.25px;font-size:14px;line-height:14px;color:#d8d9e3;transform:scaleX(1.0358);transform-origin:0 0;-webkit-text-stroke:0.25px #d8d9e3;">Yearly Cost</div>
<svg style="left:1520.00px;top:778.20px" width="13" height="13" viewBox="0 0 13 13"><circle cx="6.5" cy="6.5" r="5.75" fill="none" stroke="#a5a6b0" stroke-width="1.25"/><path d="M6.5 5.6 V9.4" stroke="#a5a6b0" stroke-width="1.3"/><circle cx="6.5" cy="3.9" r="0.8" fill="#a5a6b0"/></svg>
<div class="t" style="left:1665.40px;top:777.25px;font-size:14px;line-height:14px;color:#d8d9e3;-webkit-text-stroke:0.25px #d8d9e3;">Yearly CO<span style="font-size:9px;position:relative;top:3px">2</span> Emissions</div>
<svg style="left:1818.50px;top:778.20px" width="13" height="13" viewBox="0 0 13 13"><circle cx="6.5" cy="6.5" r="5.75" fill="none" stroke="#a5a6b0" stroke-width="1.25"/><path d="M6.5 5.6 V9.4" stroke="#a5a6b0" stroke-width="1.3"/><circle cx="6.5" cy="3.9" r="0.8" fill="#a5a6b0"/></svg>
<div class="t" style="left:1230.72px;top:595.88px;font-size:45.56px;line-height:45.56px;color:#f7f8fa;transform:scaleX(1.0335);transform-origin:0 0;-webkit-text-stroke:0.018em currentColor;">557</div>
<div class="t" style="left:1315.65px;top:611.55px;font-size:27.59px;line-height:27.59px;color:#f7f8fa;transform:scaleX(1.0537);transform-origin:0 0;-webkit-text-stroke:0.018em currentColor;">kWh</div>
<div class="t" style="left:1479.80px;top:593.31px;font-size:50.56px;line-height:50.56px;color:#f7f8fa;transform:scaleX(0.8925);transform-origin:0 0;-webkit-text-stroke:0.018em currentColor;">$57.5</div>
<div class="t" style="left:1687.29px;top:596.31px;font-size:45.06px;line-height:45.06px;color:#f7f8fa;transform:scaleX(1.0843);transform-origin:0 0;-webkit-text-stroke:0.018em currentColor;">0.0269</div>
<div class="t" style="left:1844.77px;top:610.47px;font-size:28.59px;line-height:28.59px;color:#f7f8fa;transform:scaleX(1.0109);transform-origin:0 0;-webkit-text-stroke:0.018em currentColor;">t</div>
<div class="t" style="left:1222.84px;top:703.53px;font-size:44.21px;line-height:44.21px;color:#f7f8fa;transform:scaleX(0.9700);transform-origin:0 0;-webkit-text-stroke:0.018em currentColor;">16.6</div>
<div class="t" style="left:1313.28px;top:718.63px;font-size:26.9px;line-height:26.9px;color:#f7f8fa;transform:scaleX(1.0511);transform-origin:0 0;-webkit-text-stroke:0.018em currentColor;">MWh</div>
<div class="t" style="left:1471.21px;top:702.04px;font-size:46.19px;line-height:46.19px;color:#f7f8fa;transform:scaleX(0.9688);transform-origin:0 0;-webkit-text-stroke:0.018em currentColor;">$1.66</div>
<div class="t" style="left:1583.48px;top:718.48px;font-size:26.6px;line-height:26.6px;color:#f7f8fa;transform:scaleX(0.9711);transform-origin:0 0;-webkit-text-stroke:0.018em currentColor;">K</div>
<div class="t" style="left:1706.76px;top:702.89px;font-size:44.49px;line-height:44.49px;color:#f7f8fa;transform:scaleX(1.0028);transform-origin:0 0;-webkit-text-stroke:0.018em currentColor;">0.621</div>
<div class="t" style="left:1825.57px;top:716.57px;font-size:28.59px;line-height:28.59px;color:#f7f8fa;transform:scaleX(1.0109);transform-origin:0 0;-webkit-text-stroke:0.018em currentColor;">t</div>
<div class="t" style="left:1225.99px;top:810.00px;font-size:43.08px;line-height:43.08px;color:#f7f8fa;transform:scaleX(1.0415);transform-origin:0 0;-webkit-text-stroke:0.018em currentColor;">198</div>
<div class="t" style="left:1308.25px;top:824.95px;font-size:25.93px;line-height:25.93px;color:#f7f8fa;transform:scaleX(1.1043);transform-origin:0 0;-webkit-text-stroke:0.018em currentColor;">MWh</div>
<div class="t" style="left:1471.91px;top:808.42px;font-size:47.03px;line-height:47.03px;color:#f7f8fa;transform:scaleX(0.9415);transform-origin:0 0;-webkit-text-stroke:0.018em currentColor;">$19.8</div>
<div class="t" style="left:1583.48px;top:825.09px;font-size:27.18px;line-height:27.18px;color:#f7f8fa;transform:scaleX(0.9503);transform-origin:0 0;-webkit-text-stroke:0.018em currentColor;">K</div>
<div class="t" style="left:1714.92px;top:809.27px;font-size:45.34px;line-height:45.34px;color:#f7f8fa;transform:scaleX(1.0665);transform-origin:0 0;-webkit-text-stroke:0.018em currentColor;">8.02</div>
<div class="t" style="left:1815.91px;top:822.88px;font-size:29.51px;line-height:29.51px;color:#f7f8fa;transform:scaleX(1.1119);transform-origin:0 0;-webkit-text-stroke:0.018em currentColor;">t</div>
<svg style="left:24.5px;top:887.5px" width="9" height="6" viewBox="0 0 9 6"><path d="M1 1 L4.5 4.6 L8 1" fill="none" stroke="#cfd0da" stroke-width="1.4"/></svg>
<div class="t" style="left:35.75px;top:881.68px;font-size:15.5px;line-height:15.5px;color:#dcdde6;transform:scaleX(1.0547);transform-origin:0 0;-webkit-text-stroke:0.3px #dcdde6;">Sites</div>
<div class="p" style="left:15.00px;top:912.00px;width:1869.00px;height:178.00px;"></div>
<div class="t" style="left:28.93px;top:927.37px;font-size:13.5px;line-height:13.5px;color:#d8d9e3;transform:scaleX(1.0750);transform-origin:0 0;-webkit-text-stroke:0.25px #d8d9e3;">Site</div>
<svg style="left:57.60px;top:927.50px" width="13" height="13" viewBox="0 0 13 13"><path d="M1.3 0.7 H11.2 C12.2 0.7 12.6 1.6 11.9 2.4 L8.0 6.6 V10.8 L5.0 12.0 V6.6 L1.1 2.4 C0.4 1.6 0.6 0.7 1.3 0.7 Z" fill="none" stroke="#a5a6b0" stroke-width="1.15" stroke-linejoin="round"/><path d="M1.8 2.3 H10.8" stroke="#a5a6b0" stroke-width="1" opacity="0.7"/></svg>
<div class="t" style="left:282.21px;top:927.37px;font-size:13.5px;line-height:13.5px;color:#d8d9e3;transform:scaleX(1.0781);transform-origin:0 0;-webkit-text-stroke:0.25px #d8d9e3;">Hosts Count</div>
<svg style="left:367.10px;top:927.50px" width="13" height="13" viewBox="0 0 13 13"><path d="M1.3 0.7 H11.2 C12.2 0.7 12.6 1.6 11.9 2.4 L8.0 6.6 V10.8 L5.0 12.0 V6.6 L1.1 2.4 C0.4 1.6 0.6 0.7 1.3 0.7 Z" fill="none" stroke="#a5a6b0" stroke-width="1.15" stroke-linejoin="round"/><path d="M1.8 2.3 H10.8" stroke="#a5a6b0" stroke-width="1" opacity="0.7"/></svg>
<div class="t" style="left:452.80px;top:927.37px;font-size:13.5px;line-height:13.5px;color:#d8d9e3;transform:scaleX(1.0824);transform-origin:0 0;-webkit-text-stroke:0.25px #d8d9e3;">Hosts Sites Distribution</div>
<svg style="left:607.60px;top:927.50px" width="13" height="13" viewBox="0 0 13 13"><path d="M1.3 0.7 H11.2 C12.2 0.7 12.6 1.6 11.9 2.4 L8.0 6.6 V10.8 L5.0 12.0 V6.6 L1.1 2.4 C0.4 1.6 0.6 0.7 1.3 0.7 Z" fill="none" stroke="#a5a6b0" stroke-width="1.15" stroke-linejoin="round"/><path d="M1.8 2.3 H10.8" stroke="#a5a6b0" stroke-width="1" opacity="0.7"/></svg>
<div class="t" style="left:697.08px;top:927.37px;font-size:13.5px;line-height:13.5px;color:#d8d9e3;transform:scaleX(1.0613);transform-origin:0 0;-webkit-text-stroke:0.25px #d8d9e3;">Total Power</div>
<svg style="left:777.10px;top:927.50px" width="13" height="13" viewBox="0 0 13 13"><path d="M1.3 0.7 H11.2 C12.2 0.7 12.6 1.6 11.9 2.4 L8.0 6.6 V10.8 L5.0 12.0 V6.6 L1.1 2.4 C0.4 1.6 0.6 0.7 1.3 0.7 Z" fill="none" stroke="#a5a6b0" stroke-width="1.15" stroke-linejoin="round"/><path d="M1.8 2.3 H10.8" stroke="#a5a6b0" stroke-width="1" opacity="0.7"/></svg>
<div class="t" style="left:926.42px;top:927.37px;font-size:13.5px;line-height:13.5px;color:#d8d9e3;transform:scaleX(0.9744);transform-origin:0 0;-webkit-text-stroke:0.25px #d8d9e3;">PUE</div>
<svg style="left:958.10px;top:927.50px" width="13" height="13" viewBox="0 0 13 13"><path d="M1.3 0.7 H11.2 C12.2 0.7 12.6 1.6 11.9 2.4 L8.0 6.6 V10.8 L5.0 12.0 V6.6 L1.1 2.4 C0.4 1.6 0.6 0.7 1.3 0.7 Z" fill="none" stroke="#a5a6b0" stroke-width="1.15" stroke-linejoin="round"/><path d="M1.8 2.3 H10.8" stroke="#a5a6b0" stroke-width="1" opacity="0.7"/></svg>
<div class="t" style="left:1096.38px;top:927.37px;font-size:13.5px;line-height:13.5px;color:#d8d9e3;transform:scaleX(1.1025);transform-origin:0 0;-webkit-text-stroke:0.25px #d8d9e3;">Electricity Cost</div>
<svg style="left:1200.10px;top:927.50px" width="13" height="13" viewBox="0 0 13 13"><path d="M1.3 0.7 H11.2 C12.2 0.7 12.6 1.6 11.9 2.4 L8.0 6.6 V10.8 L5.0 12.0 V6.6 L1.1 2.4 C0.4 1.6 0.6 0.7 1.3 0.7 Z" fill="none" stroke="#a5a6b0" stroke-width="1.15" stroke-linejoin="round"/><path d="M1.8 2.3 H10.8" stroke="#a5a6b0" stroke-width="1" opacity="0.7"/></svg>
<div class="t" style="left:1310px;top:927.37px;font-size:13.5px;line-height:13.5px;color:#d8d9e3;-webkit-text-stroke:0.25px #d8d9e3;transform:scaleX(1.055);transform-origin:0 0">CO<span style="font-size:9px;position:relative;top:3px">2</span> Intensity</div>
<svg style="left:1399.60px;top:927.50px" width="13" height="13" viewBox="0 0 13 13"><path d="M1.3 0.7 H11.2 C12.2 0.7 12.6 1.6 11.9 2.4 L8.0 6.6 V10.8 L5.0 12.0 V6.6 L1.1 2.4 C0.4 1.6 0.6 0.7 1.3 0.7 Z" fill="none" stroke="#a5a6b0" stroke-width="1.15" stroke-linejoin="round"/><path d="M1.8 2.3 H10.8" stroke="#a5a6b0" stroke-width="1" opacity="0.7"/></svg>
<div class="t" style="left:1488.77px;top:927.37px;font-size:13.5px;line-height:13.5px;color:#d8d9e3;transform:scaleX(1.0780);transform-origin:0 0;-webkit-text-stroke:0.25px #d8d9e3;">Ambient Temperature</div>
<svg style="left:1631.60px;top:927.50px" width="13" height="13" viewBox="0 0 13 13"><path d="M1.3 0.7 H11.2 C12.2 0.7 12.6 1.6 11.9 2.4 L8.0 6.6 V10.8 L5.0 12.0 V6.6 L1.1 2.4 C0.4 1.6 0.6 0.7 1.3 0.7 Z" fill="none" stroke="#a5a6b0" stroke-width="1.15" stroke-linejoin="round"/><path d="M1.8 2.3 H10.8" stroke="#a5a6b0" stroke-width="1" opacity="0.7"/></svg>
<div class="t" style="left:1713.80px;top:927.37px;font-size:13.5px;line-height:13.5px;color:#d8d9e3;transform:scaleX(1.0864);transform-origin:0 0;-webkit-text-stroke:0.25px #d8d9e3;">Heating Margin</div>
<svg style="left:1817.10px;top:927.50px" width="13" height="13" viewBox="0 0 13 13"><path d="M1.3 0.7 H11.2 C12.2 0.7 12.6 1.6 11.9 2.4 L8.0 6.6 V10.8 L5.0 12.0 V6.6 L1.1 2.4 C0.4 1.6 0.6 0.7 1.3 0.7 Z" fill="none" stroke="#a5a6b0" stroke-width="1.15" stroke-linejoin="round"/><path d="M1.8 2.3 H10.8" stroke="#a5a6b0" stroke-width="1" opacity="0.7"/></svg>
<div class="b" style="left:24px;top:946px;width:1852px;height:1px;background:#2a2c31"></div>
<div class="b" style="left:24px;top:980px;width:1441px;height:1px;background:#2a2c31"></div>
<div class="b" style="left:229px;top:946.5px;width:1px;height:68px;background:#2a2c31"></div>
<div class="b" style="left:435px;top:946.5px;width:1px;height:68px;background:#2a2c31"></div>
<div class="b" style="left:640px;top:946.5px;width:1px;height:68px;background:#2a2c31"></div>
<div class="b" style="left:846.5px;top:946.5px;width:1px;height:68px;background:#2a2c31"></div>
<div class="b" style="left:1052px;top:946.5px;width:1px;height:68px;background:#2a2c31"></div>
<div class="b" style="left:1258px;top:946.5px;width:1px;height:68px;background:#2a2c31"></div>
<div class="t" style="left:29.33px;top:957.25px;font-size:14px;line-height:14px;color:#6e9fff;transform:scaleX(1.0464);transform-origin:0 0;-webkit-text-stroke:0.2px #6e9fff">Sentry-Paris</div>
<div class="t" style="left:-273.60px;width:1200px;text-align:center;top:957.25px;font-size:14px;line-height:14px;color:#6e9fff;transform-origin:50% 0;-webkit-text-stroke:0.2px #6e9fff">50</div>
<div class="t" style="left:-68.00px;width:1200px;text-align:center;top:957.25px;font-size:14px;line-height:14px;color:#6e9fff;transform-origin:50% 0;-webkit-text-stroke:0.2px #6e9fff">58%</div>
<div class="b" style="left:646.7px;top:952.7px;width:121px;height:20.6px;background:#22252b;border-radius:2px"></div>
<div class="b" style="left:646.7px;top:952.7px;width:124px;height:20.6px;background:#3274d9;border-radius:2px"></div>
<div class="t" style="left:-369.00px;width:1200px;text-align:right;top:957.59px;font-size:13.6px;line-height:13.6px;color:#c7c8d2;transform-origin:100% 0;-webkit-text-stroke:0.2px #c7c8d2;">9.23 kW</div>
<div class="t" style="left:349.50px;width:1200px;text-align:center;top:957.25px;font-size:14px;line-height:14px;color:#cccb46;transform-origin:50% 0;text-decoration:underline;-webkit-text-stroke:0.2px #cccb46;">1.48</div>
<div class="t" style="left:549.50px;width:1200px;text-align:center;top:957.25px;font-size:14px;line-height:14px;color:#6e9fff;transform-origin:50% 0;-webkit-text-stroke:0.2px #6e9fff">0.103 $/kWh</div>
<div class="b" style="left:1264.6px;top:952.7px;width:69.4px;height:20.6px;background:#22252b;border-radius:2px"></div>
<div class="b" style="left:1264.6px;top:952.7px;width:7.4px;height:20.6px;background:#73bf69;border-radius:2px"></div>
<div class="t" style="left:248.50px;width:1200px;text-align:right;top:957.84px;font-size:13.3px;line-height:13.3px;color:#c7c8d2;transform-origin:100% 0;-webkit-text-stroke:0.2px #c7c8d2;">48.3 grams/kWh</div>
<div class="b" style="left:1465px;top:946.6px;width:205px;height:34px;background:#c9bf9a"></div>
<div class="t" style="left:967.00px;width:1200px;text-align:center;top:957.25px;font-size:14px;line-height:14px;color:#24262b;transform-origin:50% 0;text-decoration:underline;-webkit-text-stroke:0.15px #24262b">23.3 °C</div>
<div class="b" style="left:1671px;top:946.6px;width:205px;height:34px;background:#f2495c"></div>
<div class="t" style="left:1173.50px;width:1200px;text-align:center;top:957.25px;font-size:14px;line-height:14px;color:#ffffff;transform-origin:50% 0;text-decoration:underline;-webkit-text-stroke:0.15px #fff;">0 °C</div>
<div class="t" style="left:29.33px;top:990.35px;font-size:14px;line-height:14px;color:#6e9fff;transform:scaleX(1.0402);transform-origin:0 0;-webkit-text-stroke:0.2px #6e9fff">Sentry-Ottawa</div>
<div class="t" style="left:-273.60px;width:1200px;text-align:center;top:990.35px;font-size:14px;line-height:14px;color:#6e9fff;transform-origin:50% 0;-webkit-text-stroke:0.2px #6e9fff">36</div>
<div class="t" style="left:-68.00px;width:1200px;text-align:center;top:990.35px;font-size:14px;line-height:14px;color:#6e9fff;transform-origin:50% 0;-webkit-text-stroke:0.2px #6e9fff">42%</div>
<div class="b" style="left:646.7px;top:986.2px;width:121px;height:20.6px;background:#22252b;border-radius:2px"></div>
<div class="b" style="left:646.7px;top:986.2px;width:92.3px;height:20.6px;background:#3274d9;border-radius:2px"></div>
<div class="t" style="left:-369.00px;width:1200px;text-align:right;top:990.69px;font-size:13.6px;line-height:13.6px;color:#c7c8d2;transform-origin:100% 0;-webkit-text-stroke:0.2px #c7c8d2;">6.79 kW</div>
<div class="t" style="left:349.50px;width:1200px;text-align:center;top:990.35px;font-size:14px;line-height:14px;color:#cccb46;transform-origin:50% 0;text-decoration:underline;-webkit-text-stroke:0.2px #cccb46;">1.50</div>
<div class="t" style="left:549.50px;width:1200px;text-align:center;top:990.35px;font-size:14px;line-height:14px;color:#6e9fff;transform-origin:50% 0;-webkit-text-stroke:0.2px #6e9fff">0.103 $/kWh</div>
<div class="b" style="left:1264.6px;top:986.2px;width:69.4px;height:20.6px;background:#22252b;border-radius:2px"></div>
<div class="b" style="left:1264.6px;top:986.2px;width:7.4px;height:20.6px;background:#73bf69;border-radius:2px"></div>
<div class="t" style="left:248.50px;width:1200px;text-align:right;top:990.94px;font-size:13.3px;line-height:13.3px;color:#c7c8d2;transform-origin:100% 0;-webkit-text-stroke:0.2px #c7c8d2;">48.2 grams/kWh</div>
<div class="b" style="left:1465px;top:980.6px;width:205px;height:34px;background:#d9b48b"></div>
<div class="t" style="left:967.00px;width:1200px;text-align:center;top:990.35px;font-size:14px;line-height:14px;color:#24262b;transform-origin:50% 0;text-decoration:underline;-webkit-text-stroke:0.15px #24262b">24.6 °C</div>
<div class="b" style="left:1671px;top:980.6px;width:205px;height:34px;background:#ff9830"></div>
<div class="t" style="left:1173.50px;width:1200px;text-align:center;top:990.35px;font-size:14px;line-height:14px;color:#ffffff;transform-origin:50% 0;text-decoration:underline;-webkit-text-stroke:0.15px #fff;">12 °C</div>
<div class="b" style="left:24px;top:1035px;width:1852px;height:1px;background:#2e3036"></div>
<div class="b" style="left:855.2px;top:1047px;width:29.5px;height:21px;background:#1e2025;border-radius:2px"></div>
<svg style="left:866.5px;top:1053px" width="6" height="9" viewBox="0 0 6 9"><path d="M4.6 1 L1.3 4.5 L4.6 8" fill="none" stroke="#7c7d86" stroke-width="1.2"/></svg>
<div class="b" style="left:894.2px;top:1046.7px;width:19.59999999999991px;height:22.200000000000045px;background:#3d71d9;border-radius:2px"></div>
<div class="t" style="left:304.00px;width:1200px;text-align:center;top:1052.14px;font-size:12px;line-height:12px;color:#ffffff;font-weight:700;transform-origin:50% 0;">1</div>
<div class="b" style="left:923px;top:1047px;width:30.799999999999955px;height:21px;background:#1e2025;border-radius:2px"></div>
<svg style="left:935px;top:1053px" width="6" height="9" viewBox="0 0 6 9"><path d="M1.3 1 L4.6 4.5 L1.3 8" fill="none" stroke="#7c7d86" stroke-width="1.2"/></svg>
<div class="t" style="left:967.55px;top:1051.34px;font-size:12px;line-height:12px;color:#a5a6b0;transform:scaleX(1.0403);transform-origin:0 0;">1 - 2 of 2 rows</div>
</body></html>
